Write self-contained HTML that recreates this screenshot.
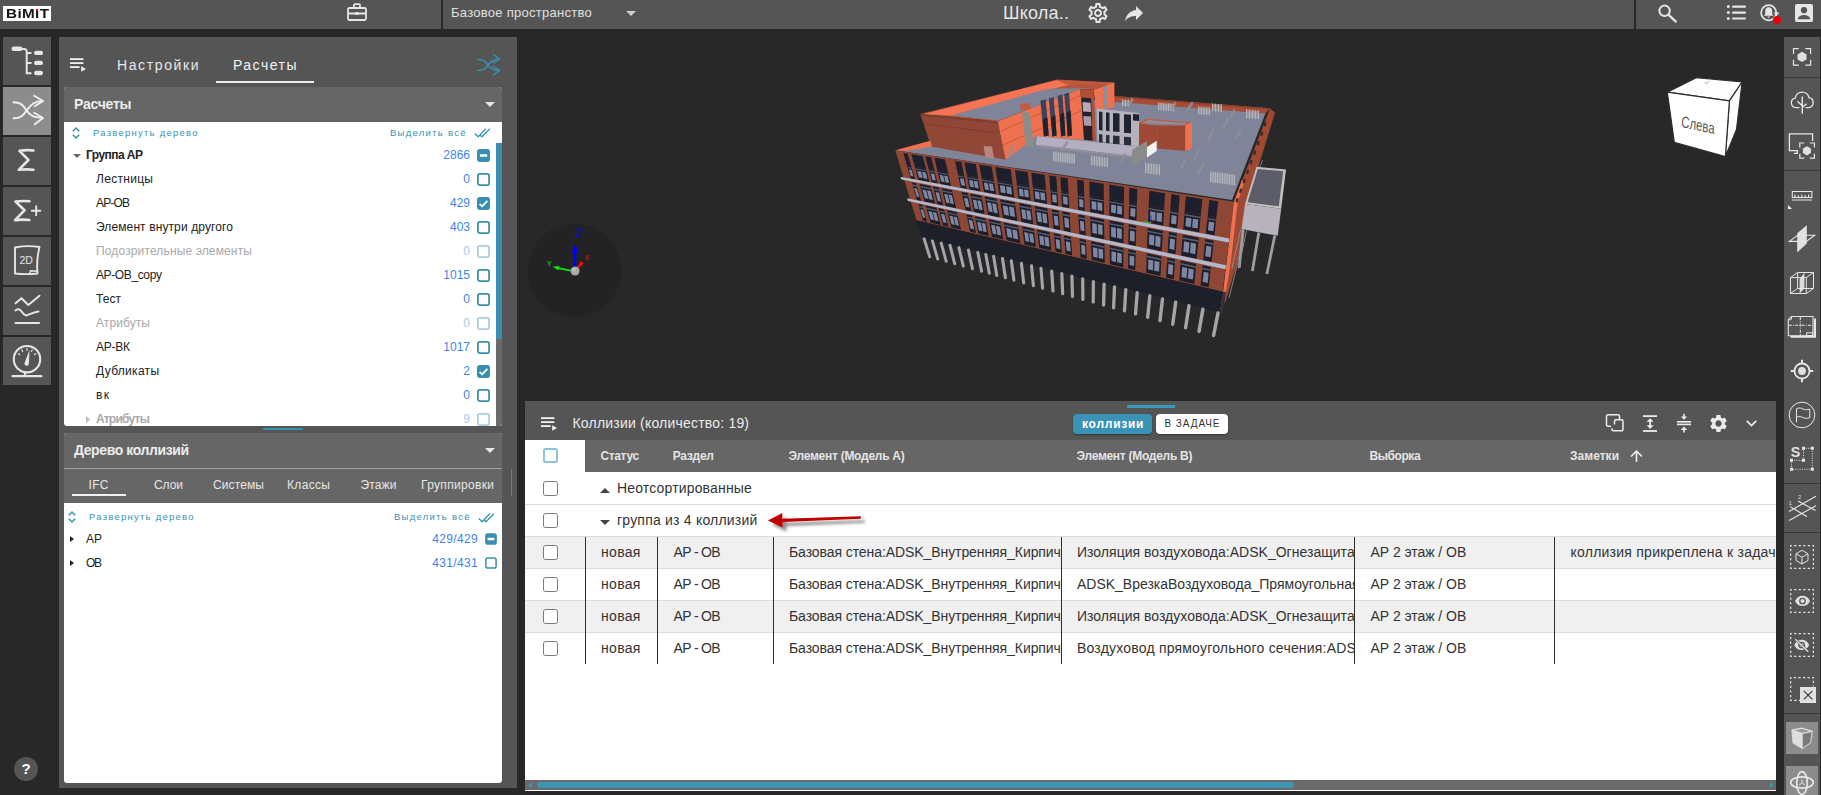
<!DOCTYPE html>
<html lang="ru">
<head>
<meta charset="utf-8">
<title>BIMIT</title>
<style>
*{box-sizing:border-box;margin:0;padding:0}
html,body{width:1821px;height:795px;overflow:hidden;background:#282828;font-family:"Liberation Sans",sans-serif;color:#e6e6e6}
.a{position:absolute}
.t{position:absolute;white-space:nowrap;line-height:1}
svg{position:absolute;overflow:visible}
#topbar{left:0;top:0;width:1821px;height:29px;background:#555}
.sb{left:3px;width:48px;height:48px;background:#555}
.sb.act{background:#8c8c8c}
#lpanel{left:59px;top:37px;width:458px;height:750.500px;background:#555}
.card{background:#fff;border-radius:3px;overflow:hidden}
.chead{left:0;top:0;width:100%;height:35px;background:#666}
.row{left:0;width:100%;height:24px}
.row .n{left:32px;top:6px;font-size:12px;color:#222}
.row .c{right:32px;top:6px;font-size:12px;color:#3d84e6;text-align:right}
.row.dim .n{color:#a8a8a8}
.row.dim .c{color:#a9c8ee}
.cb{position:absolute;width:12px;height:12px;border:1.5px solid #3a8fb0;border-radius:2px;background:#fff}
.cb.on{background:#3a8fb0}
.cb.dim{border-color:#a7cfdd}
.gcb{position:absolute;width:14px;height:14px;border:1.5px solid #767676;border-radius:2px;background:#fff}
#rtool{left:1785px;top:37px;width:33px;height:758px;background:#555}
#bpanel{left:525px;top:401px;width:1251px;height:390px;background:#fff;overflow:hidden}
.tr{left:0;width:1251px;height:32px;border-top:1px solid #dcdcdc;font-size:14px;color:#333}
.tr.alt{background:#f0f0f0}
.tr .t{top:8px}
.vl{position:absolute;top:0;width:1.3px;height:32px;background:#2e2e2e}
</style>
</head>
<body>
<!-- TOP BAR -->
<div id="topbar" class="a">
  <div class="a" style="left:3px;top:6px;width:48px;height:15px;background:#fff"></div>
  <div class="t" style="left:5.600px;top:7.800px;font-size:12px;font-weight:700;letter-spacing:.3px;color:#151515;transform:scaleX(1.270);transform-origin:0 0">BiMıT</div>
  <div class="a" style="left:36.100px;top:8.800px;width:2.300px;height:1.800px;background:#e8000b"></div>
  <svg style="left:347px;top:3px" width="20" height="18" viewBox="0 0 20 18" fill="none" stroke="#e6e6e6" stroke-width="1.8">
    <rect x="1" y="5" width="18" height="12" rx="1.5"/><path d="M7 5V2.2a1 1 0 0 1 1-1h4a1 1 0 0 1 1 1V5M1 10.5h18"/><rect x="8.5" y="9" width="3" height="3" fill="#e6e6e6" stroke="none"/>
  </svg>
  <div class="a" style="left:441px;top:0;width:2px;height:29px;background:#2a2a2a"></div>
  <div class="t" style="left:451px;top:6px;font-size:13px;color:#e0e0e0;letter-spacing:0.28px">Базовое пространство</div>
  <svg style="left:626px;top:11px" width="10" height="5" viewBox="0 0 10 5"><path d="M0 0h10L5 5z" fill="#cfcfcf"/></svg>
  <div class="t" style="left:1003px;top:4px;font-size:18px;color:#e6e6e6;letter-spacing:0.2px">Школа..</div>
  <svg style="left:1086px;top:1px" width="24" height="24" viewBox="0 0 24 24" fill="#e6e6e6"><path d="M19.43 12.98c.04-.32.07-.64.07-.98 0-.34-.03-.66-.07-.98l2.11-1.65c.19-.15.24-.42.12-.64l-2-3.46a.5.5 0 0 0-.61-.22l-2.49 1c-.52-.4-1.08-.73-1.69-.98l-.38-2.65A.488.488 0 0 0 14 2h-4c-.25 0-.46.18-.49.42l-.38 2.65c-.61.25-1.17.59-1.69.98l-2.49-1a.566.566 0 0 0-.18-.03c-.17 0-.34.09-.43.25l-2 3.46c-.13.22-.07.49.12.64l2.11 1.65c-.04.32-.07.65-.07.98 0 .33.03.66.07.98l-2.11 1.65c-.19.15-.24.42-.12.64l2 3.46a.5.5 0 0 0 .61.22l2.49-1c.52.4 1.08.73 1.69.98l.38 2.65c.03.24.24.42.49.42h4c.25 0 .46-.18.49-.42l.38-2.65c.61-.25 1.17-.59 1.69-.98l2.49 1c.06.02.12.03.18.03.17 0 .34-.09.43-.25l2-3.46c.12-.22.07-.49-.12-.64l-2.11-1.65zm-1.98-1.71c.04.31.05.52.05.73 0 .21-.02.43-.05.73l-.14 1.13.89.7 1.08.84-.7 1.21-1.27-.51-1.04-.42-.9.68c-.43.32-.84.56-1.25.73l-1.06.43-.16 1.13-.2 1.35h-1.4l-.19-1.35-.16-1.13-1.06-.43c-.43-.18-.83-.41-1.23-.71l-.91-.7-1.06.43-1.27.51-.7-1.21 1.08-.84.89-.7-.14-1.13c-.03-.31-.05-.54-.05-.74s.02-.43.05-.73l.14-1.13-.89-.7-1.08-.84.7-1.21 1.27.51 1.04.42.9-.68c.43-.32.84-.56 1.25-.73l1.06-.43.16-1.13.2-1.35h1.39l.19 1.35.16 1.13 1.06.43c.43.18.83.41 1.23.71l.91.7 1.06-.43 1.27-.51.7 1.21-1.07.85-.89.7.14 1.13zM12 8c-2.21 0-4 1.79-4 4s1.790 4 4 4 4-1.790 4-4-1.790-4-4-4zm0 6c-1.100 0-2-.9-2-2s.9-2 2-2 2 .9 2 2-.9 2-2 2z"/></svg>
  <svg style="left:1121.5px;top:1px" width="24" height="24" viewBox="0 0 24 24" fill="#e6e6e6"><path d="M14 9V5l7 7-7 7v-4.100c-5 0-8.500 1.600-11 5.100 1-5 4-10 11-11z"/></svg>
  <div class="a" style="left:1634px;top:0;width:2px;height:29px;background:#2a2a2a"></div>
  <svg style="left:1657px;top:3px" width="22" height="21" viewBox="0 0 22 21" fill="none" stroke="#e6e6e6" stroke-width="2"><circle cx="7.600" cy="7.800" r="5.200"/><path d="M11.600 11.800l7.800 7.300" stroke-width="2.300"/></svg>
  <svg style="left:1726px;top:4px" width="21" height="18" viewBox="0 0 21 18" fill="#e6e6e6"><circle cx="2.300" cy="2.600" r="1.500"/><circle cx="2.300" cy="8.600" r="1.500"/><circle cx="2.300" cy="14.500" r="1.500"/><rect x="6" y="1.500" width="14" height="2.200" rx="1"/><rect x="6" y="7.500" width="14" height="2.200" rx="1"/><rect x="6" y="13.400" width="14" height="2.200" rx="1"/></svg>
  <svg style="left:1759px;top:3px" width="24" height="24" viewBox="0 0 24 24"><circle cx="9.700" cy="9.800" r="7.600" fill="none" stroke="#e6e6e6" stroke-width="1.700"/><path d="M9.700 4.300c-2.200 0-3.500 1.700-3.500 3.800v3l-1.200 1.700h9.400l-1.200-1.700v-3c0-2.100-1.300-3.800-3.500-3.800zM8.500 13.600a1.200 1.200 0 0 0 2.400 0z" fill="#e6e6e6"/><path d="M14.500 9.500h6l-3 3.500z" fill="#e6e6e6"/><circle cx="18" cy="16.900" r="4" fill="#e8000b"/></svg>
  <svg style="left:1795px;top:4px" width="18" height="18" viewBox="0 0 18 18"><rect width="18" height="18" rx="2" fill="#e6e6e6"/><circle cx="9" cy="6.200" r="3.100" fill="#555"/><path d="M2.800 15.200c0-3 4.100-4.300 6.200-4.300s6.200 1.300 6.200 4.300z" fill="#555"/></svg>
</div>
<!-- LEFT SIDEBAR -->
<div class="a sb" style="top:37px">
  <svg style="left:0;top:0" width="48" height="48" viewBox="3 37 48 48" fill="none" stroke="#e6e6e6" stroke-width="2" stroke-linecap="round">
    <rect x="11.500" y="46.500" width="11" height="4.600" rx="2.300" fill="#e6e6e6" stroke="none"/>
    <path d="M21 49h3.200q2.500 0 2.500 2.500V73.200h4M26.700 53h4M26.700 63h4"/>
    <rect x="34" y="50.700" width="9" height="4.400" rx="2.200" fill="#e6e6e6" stroke="none"/>
    <rect x="34" y="60.700" width="9" height="4.400" rx="2.200" fill="#e6e6e6" stroke="none"/>
    <rect x="34" y="70.800" width="9" height="4.400" rx="2.200" fill="#e6e6e6" stroke="none"/>
  </svg>
</div>
<div class="a sb act" style="top:87px">
  <svg style="left:0;top:0" width="48" height="48" viewBox="3 87 48 48" fill="none" stroke="#f0f0f0" stroke-width="1.900" stroke-linecap="round" stroke-linejoin="round">
    <path d="M13.500 102.200c9 0 10.500 5 14 9.500s7 6.200 15 6.200"/>
    <path d="M13.500 118.300c9 0 10.500-4.500 14-9s7-8.300 15-8.300"/>
    <path d="M34.200 95.800l8.800 5.200-8.300 5.300"/>
    <path d="M34.200 112.800l8.800 5.200-8.300 6.300"/>
  </svg>
</div>
<div class="a sb" style="top:137px">
  <svg style="left:0;top:0" width="48" height="48" viewBox="3 137 48 48" fill="none" stroke="#e6e6e6" stroke-width="2.600" stroke-linecap="round" stroke-linejoin="round">
    <path d="M33.500 150.500c-5-.6-9.500-.4-14 .3l9 9.200-9.800 9.800c5-.6 10-.6 14.800-.1"/>
  </svg>
</div>
<div class="a sb" style="top:187px">
  <svg style="left:0;top:0" width="48" height="48" viewBox="3 187 48 48" fill="none" stroke="#e6e6e6" stroke-width="2.600" stroke-linecap="round" stroke-linejoin="round">
    <path d="M29.500 201.300c-5-.6-9.500-.4-14 .3l9 8.700-9.500 9.800c5-.6 9.500-.6 14.300-.1"/>
    <path d="M31.800 210.800h8.600M36.200 206.300v9" stroke-width="1.900"/>
  </svg>
</div>
<div class="a sb" style="top:237px">
  <svg style="left:0;top:0" width="48" height="48" viewBox="3 237 48 48" fill="none" stroke="#e6e6e6" stroke-width="1.900" stroke-linejoin="round">
    <path d="M15 247.500c8-1.600 17-1.700 24.500-.5-2 8-3 16-2 26.500-7 .8-15 .8-22.500 0z"/>
    <path d="M29.500 274l1-3.200 7 .5" stroke-width="1.400"/>
    <text x="26.200" y="264.200" font-family="Liberation Sans,sans-serif" font-size="10.500" fill="#e6e6e6" stroke="none" text-anchor="middle">2D</text>
  </svg>
</div>
<div class="a sb" style="top:287px">
  <svg style="left:0;top:0" width="48" height="48" viewBox="3 287 48 48" fill="none" stroke="#e6e6e6" stroke-width="2" stroke-linecap="round" stroke-linejoin="round">
    <path d="M15.500 303.300l6-5 6.800 6.700 11.200-9.300"/>
    <path d="M15.500 310.500c2-1.600 4-1.600 5.500.3 2 2.600 3.500 5 5.500 4.600 4-1 7-3.300 12-4"/>
    <path d="M15.500 323h23.500" stroke-width="2.200"/>
  </svg>
</div>
<div class="a sb" style="top:337px">
  <svg style="left:0;top:0" width="48" height="48" viewBox="3 337 48 48" fill="none" stroke="#e6e6e6" stroke-width="1.900" stroke-linecap="round">
    <circle cx="27" cy="359.200" r="13.200" stroke-width="2.100"/>
    <path d="M25 372v4M12.500 376.200h29" stroke-width="2.200"/>
    <path d="M29.500 349.800l-.6 14.300a2.300 2.300 0 0 1-4.500-.6z" fill="#e6e6e6" stroke="none"/>
    <path d="M27 348.500v1.800M21.800 350l.8 1.500M32.200 350l-.8 1.500M18.300 353.600l1.400 1.100M35.700 353.600l-1.400 1.100" stroke-width="1.200"/>
  </svg>
</div>
<div class="a" style="left:14px;top:757px;width:24px;height:24px;border-radius:12px;background:#555"></div>
<div class="t" style="left:14px;top:761px;width:24px;text-align:center;font-size:15px;font-weight:700;color:#fff">?</div>
<!-- LEFT PANEL -->
<div id="lpanel" class="a">
  <svg style="left:11px;top:21px" width="17" height="15" viewBox="70 58 17 15" fill="#f0f0f0"><rect x="70" y="58.200" width="13.400" height="1.800"/><rect x="70" y="62.200" width="13.400" height="1.800"/><rect x="70" y="66.200" width="9.600" height="1.800"/><path d="M81.200 66.300l4.800 2.700-4.800 2.700z"/></svg>
  <div class="t" style="left:58px;top:21px;font-size:14px;color:#e8e8e8;letter-spacing:1.61px">Настройки</div>
  <div class="t" style="left:174px;top:21px;font-size:14px;color:#f4f4f4;letter-spacing:1.48px">Расчеты</div>
  <div class="a" style="left:157px;top:44px;width:98px;height:2px;background:#f0f0f0"></div>
  <svg style="left:418px;top:16px" width="24" height="23" viewBox="477 53 24 23" fill="none" stroke="#3792b4" stroke-width="1.500" stroke-linecap="round" stroke-linejoin="round"><path d="M478 59.500c7 0 8 3.300 10.500 6.300s5 4.700 11 4.700"/><path d="M478 70.500c7 0 8-3 10.500-6s5-5.500 11-5.500"/><path d="M493.500 54.500l6 4.500-6 4"/><path d="M493.500 66.500l6 4-6 4.500"/></svg>
  <div class="a card" style="left:5px;top:50px;width:438px;height:339px">
    <div class="a chead"></div>
    <div class="t" style="left:10px;top:10px;font-size:14px;font-weight:700;color:#ececec;letter-spacing:-0.23px">Расчеты</div>
    <svg style="left:421px;top:15px" width="10" height="5" viewBox="0 0 10 5"><path d="M0 0h10L5 5z" fill="#e6e6e6"/></svg>
    <svg style="left:8px;top:40px" width="8" height="12" viewBox="0 0 8 12" fill="none" stroke="#3792b4" stroke-width="1.500"><path d="M.8 4.200L4 1l3.200 3.200M.8 7.800L4 11l3.200-3.200"/></svg>
    <div class="t" style="left:29px;top:41px;font-size:9.500px;color:#3792b4;letter-spacing:1.24px">Развернуть дерево</div>
    <div class="t" style="left:326px;top:41px;font-size:9.500px;color:#3792b4;letter-spacing:1.28px">Выделить всё</div>
    <svg style="left:410px;top:41px" width="17" height="10" viewBox="0 0 17 10" fill="none" stroke="#3792b4" stroke-width="1.300"><path d="M.8 5.500l3.400 3.300L11.800.8M6.300 7.300l1.600 1.500L15.800.8"/></svg>
    <div class="a row" style="top:56px"><svg style="left:9px;top:10.500px" width="8" height="4" viewBox="0 0 8 4"><path d="M0 0h8L4 4z" fill="#666"/></svg><div class="t n" style="left:22px;font-weight:700;letter-spacing:-0.55px">Группа АР</div><div class="t c">2866</div><svg style="left:413px;top:5.5px" width="13" height="13" viewBox="0 0 13 13"><rect x=".9" y=".9" width="11.2" height="11.2" rx="1.800" fill="#3a8fb0" stroke="#3a8fb0" stroke-width="1.8"/><rect x="2.9" y="5.2" width="7.3" height="2.600" rx=".5" fill="#fff"/></svg></div>
    <div class="a row" style="top:80px"><div class="t n" style="left:32px;letter-spacing:0.30px">Лестницы</div><div class="t c">0</div><svg style="left:413px;top:5.5px" width="13" height="13" viewBox="0 0 13 13"><rect x=".9" y=".9" width="11.2" height="11.2" rx="1.800" fill="#fff" stroke="#3a8fb0" stroke-width="1.8"/></svg></div>
    <div class="a row" style="top:104px"><div class="t n" style="left:32px;letter-spacing:-0.84px">АР-ОВ</div><div class="t c">429</div><svg style="left:413px;top:5.5px" width="13" height="13" viewBox="0 0 13 13"><rect x=".9" y=".9" width="11.2" height="11.2" rx="1.800" fill="#3a8fb0" stroke="#3a8fb0" stroke-width="1.8"/><path d="M2.6 6.8l2.6 2.6 5.2-5.5" fill="none" stroke="#fff" stroke-width="1.700"/></svg></div>
    <div class="a row" style="top:128px"><div class="t n" style="left:32px;letter-spacing:0.11px">Элемент внутри другого</div><div class="t c">403</div><svg style="left:413px;top:5.5px" width="13" height="13" viewBox="0 0 13 13"><rect x=".9" y=".9" width="11.2" height="11.2" rx="1.800" fill="#fff" stroke="#3a8fb0" stroke-width="1.8"/></svg></div>
    <div class="a row dim" style="top:152px"><div class="t n" style="left:32px;letter-spacing:0.14px">Подозрительные элементы</div><div class="t c">0</div><svg style="left:413px;top:5.5px" width="13" height="13" viewBox="0 0 13 13"><rect x=".9" y=".9" width="11.2" height="11.2" rx="1.800" fill="#fff" stroke="#a7cfdd" stroke-width="1.8"/></svg></div>
    <div class="a row" style="top:176px"><div class="t n" style="left:32px;letter-spacing:-0.38px">АР-ОВ_copy</div><div class="t c">1015</div><svg style="left:413px;top:5.5px" width="13" height="13" viewBox="0 0 13 13"><rect x=".9" y=".9" width="11.2" height="11.2" rx="1.800" fill="#fff" stroke="#3a8fb0" stroke-width="1.8"/></svg></div>
    <div class="a row" style="top:200px"><div class="t n" style="left:32px;letter-spacing:0.06px">Тест</div><div class="t c">0</div><svg style="left:413px;top:5.5px" width="13" height="13" viewBox="0 0 13 13"><rect x=".9" y=".9" width="11.2" height="11.2" rx="1.800" fill="#fff" stroke="#3a8fb0" stroke-width="1.8"/></svg></div>
    <div class="a row dim" style="top:224px"><div class="t n" style="left:32px;letter-spacing:0.09px">Атрибуты</div><div class="t c">0</div><svg style="left:413px;top:5.5px" width="13" height="13" viewBox="0 0 13 13"><rect x=".9" y=".9" width="11.2" height="11.2" rx="1.800" fill="#fff" stroke="#a7cfdd" stroke-width="1.8"/></svg></div>
    <div class="a row" style="top:248px"><div class="t n" style="left:32px;letter-spacing:-0.25px">АР-ВК</div><div class="t c">1017</div><svg style="left:413px;top:5.5px" width="13" height="13" viewBox="0 0 13 13"><rect x=".9" y=".9" width="11.2" height="11.2" rx="1.800" fill="#fff" stroke="#3a8fb0" stroke-width="1.8"/></svg></div>
    <div class="a row" style="top:272px"><div class="t n" style="left:32px;letter-spacing:0.30px">Дубликаты</div><div class="t c">2</div><svg style="left:413px;top:5.5px" width="13" height="13" viewBox="0 0 13 13"><rect x=".9" y=".9" width="11.2" height="11.2" rx="1.800" fill="#3a8fb0" stroke="#3a8fb0" stroke-width="1.8"/><path d="M2.6 6.8l2.6 2.6 5.2-5.5" fill="none" stroke="#fff" stroke-width="1.700"/></svg></div>
    <div class="a row" style="top:296px"><div class="t n" style="left:32px;letter-spacing:1.38px">вк</div><div class="t c">0</div><svg style="left:413px;top:5.5px" width="13" height="13" viewBox="0 0 13 13"><rect x=".9" y=".9" width="11.2" height="11.2" rx="1.800" fill="#fff" stroke="#3a8fb0" stroke-width="1.8"/></svg></div>
    <div class="a row dim" style="top:320px"><svg style="left:22px;top:9px" width="4" height="7" viewBox="0 0 4 7"><path d="M0 0v7l4-3.500z" fill="#bbb"/></svg><div class="t n" style="left:32px;font-weight:700;letter-spacing:-0.76px">Атрибуты</div><div class="t c">9</div><svg style="left:413px;top:5.5px" width="13" height="13" viewBox="0 0 13 13"><rect x=".9" y=".9" width="11.2" height="11.2" rx="1.800" fill="#fff" stroke="#a7cfdd" stroke-width="1.8"/></svg></div>
    <div class="a" style="left:432px;top:56px;width:6px;height:283px;background:#6a6a6a"></div>
    <div class="a" style="left:432px;top:56px;width:6px;height:196px;background:#3a8fb0"></div>
  </div>
  <div class="a" style="left:204px;top:391px;width:40px;height:2px;background:#3a8fb0"></div>
  <div class="a card" style="left:5px;top:396px;width:438px;height:350px">
    <div class="a chead" style="height:70px"></div>
    <div class="a" style="left:0;top:35px;width:438px;height:1px;background:#a0a0a0"></div>
    <div class="t" style="left:10px;top:10px;font-size:14px;font-weight:700;color:#ececec;letter-spacing:-0.41px">Дерево коллизий</div>
    <svg style="left:421px;top:15px" width="10" height="5" viewBox="0 0 10 5"><path d="M0 0h10L5 5z" fill="#e6e6e6"/></svg>
    <div class="t" style="left:24.5px;top:46px;font-size:12px;color:#e6e6e6;letter-spacing:0.33px">IFC</div>
    <div class="t" style="left:90.0px;top:46px;font-size:12px;color:#e6e6e6;letter-spacing:-0.06px">Слои</div>
    <div class="t" style="left:149.0px;top:46px;font-size:12px;color:#e6e6e6;letter-spacing:0.12px">Системы</div>
    <div class="t" style="left:223.0px;top:46px;font-size:12px;color:#e6e6e6;letter-spacing:0.34px">Классы</div>
    <div class="t" style="left:296.5px;top:46px;font-size:12px;color:#e6e6e6;letter-spacing:0.15px">Этажи</div>
    <div class="t" style="left:357.0px;top:46px;font-size:12px;color:#e6e6e6;letter-spacing:0.33px">Группировки</div>
    <div class="a" style="left:8px;top:61px;width:54px;height:1.500px;background:#f0f0f0"></div>
    <svg style="left:4px;top:78px" width="8" height="12" viewBox="0 0 8 12" fill="none" stroke="#3792b4" stroke-width="1.500"><path d="M.8 4.200L4 1l3.200 3.200M.8 7.800L4 11l3.200-3.200"/></svg>
    <div class="t" style="left:25px;top:78.500px;font-size:9.500px;color:#3792b4;letter-spacing:1.24px">Развернуть дерево</div>
    <div class="t" style="left:330px;top:78.500px;font-size:9.500px;color:#3792b4;letter-spacing:1.28px">Выделить всё</div>
    <svg style="left:414px;top:79.500px" width="17" height="10" viewBox="0 0 17 10" fill="none" stroke="#3792b4" stroke-width="1.300"><path d="M.8 5.500l3.400 3.300L11.800.8M6.300 7.300l1.600 1.500L15.800.8"/></svg>
    <div class="a row" style="top:94px"><svg style="left:6px;top:9px" width="4" height="6" viewBox="0 0 4 6"><path d="M0 0v6l4-3z" fill="#222"/></svg><div class="t n" style="left:22px;letter-spacing:-0.02px">АР</div><div class="t c" style="right:24px;letter-spacing:0.35px">429/429</div><svg style="left:420.5px;top:6px" width="12" height="12" viewBox="0 0 12 12"><rect x=".9" y=".9" width="10.2" height="10.2" rx="1.800" fill="#3a8fb0" stroke="#3a8fb0" stroke-width="1.5"/><rect x="2.6" y="4.7" width="6.7" height="2.600" rx=".5" fill="#fff"/></svg></div>
    <div class="a row" style="top:118px"><svg style="left:6px;top:9px" width="4" height="6" viewBox="0 0 4 6"><path d="M0 0v6l4-3z" fill="#222"/></svg><div class="t n" style="left:22px;letter-spacing:-1.34px">ОВ</div><div class="t c" style="right:24px;letter-spacing:0.35px">431/431</div><svg style="left:420.5px;top:6px" width="12" height="12" viewBox="0 0 12 12"><rect x=".9" y=".9" width="10.2" height="10.2" rx="1.800" fill="#fff" stroke="#3a8fb0" stroke-width="1.5"/></svg></div>
  </div>
  <div class="a" style="left:451.500px;top:432px;width:1.500px;height:27px;background:#3a8fb0"></div>
</div>
<!-- VIEWPORT -->
<svg style="left:0;top:0" width="1821" height="795" viewBox="0 0 1821 795" shape-rendering="geometricPrecision">
<g><polygon points="897.0,150.5 1232.0,200.0 1266.0,112.0 1114.0,100.0 1050.0,100.0 930.0,141.0" fill="#7f8499"/>
<polygon points="1112.0,95.8 1270.0,108.2 1265.5,113.6 1112.0,101.8" fill="#a84c34"/>
<polygon points="1112.0,95.8 1270.0,108.2 1269.5,109.5 1112.0,97.2" fill="#8a4030"/>
<polygon points="920.4,114.0 1057.0,79.6 1114.4,82.5 1093.6,89.8 1080.3,89.0 998.1,121.5" fill="#b4523a"/>
<polygon points="923.0,114.2 1056.5,80.3 1070.0,84.5 951.4,115.6" fill="#f37553"/>
<polygon points="951.4,115.5 1039.5,90.9 1054.0,88.5 1094.0,88.2 1080.0,89.2 998.3,120.6" fill="#7f8499"/>
<polygon points="1057.0,80.0 1114.0,82.8 1110.0,85.0 1066.0,84.6" fill="#c2583c"/>
<polygon points="920.4,114.0 998.1,121.5 1005.7,159.7 931.0,146.5" fill="#914735"/>
<polygon points="920.4,114.0 998.1,121.5 998.5,123.6 921.0,116.0" fill="#7e3d2e"/>
<path d="M925 123.800l73.800 9.300" stroke="#7a3a2c" stroke-width=".8" fill="none"/>
<polygon points="983.5,146.0 992.0,146.5 994.0,158.5 985.5,157.5" fill="#b8867e"/>
<polygon points="998.1,121.5 1080.3,89.0 1084.0,140.0 1036.7,136.3 1005.7,159.7" fill="#f0714f"/>
<path d="M1000.800 131.400l80-36M1003 145l78-34" stroke="#b5503a" stroke-width=".7" fill="none"/>
<polygon points="1022.0,112.5 1029.5,112.0 1034.0,146.5 1026.0,148.0" fill="#8c8c8c"/>
<polygon points="1020.0,104.0 1030.0,103.2 1030.6,109.0 1020.6,110.0" fill="#c55a3e"/>
<polygon points="1040.4,100.8 1045.7,99.3 1048.7,135.5 1043.9,136.5" fill="#3e4258"/>
<polygon points="1042.6,119.8 1047.4,117.3 1048.7,135.5 1043.9,136.5" fill="#20222c"/>
<polygon points="1048.8,98.4 1053.6,97.0 1056.6,135.5 1052.3,136.5" fill="#3e4258"/>
<polygon points="1051.0,117.4 1055.3,115.0 1056.6,135.5 1052.3,136.5" fill="#20222c"/>
<polygon points="1057.6,95.8 1062.4,94.4 1065.4,135.5 1061.1,136.5" fill="#3e4258"/>
<polygon points="1059.8,114.8 1064.1,112.4 1065.4,135.5 1061.1,136.5" fill="#20222c"/>
<polygon points="1064.2,93.9 1069.0,92.5 1072.0,135.5 1067.7,136.5" fill="#3e4258"/>
<polygon points="1066.4,112.9 1070.7,110.5 1072.0,135.5 1067.7,136.5" fill="#20222c"/>
<polygon points="1080.3,89.0 1093.6,89.8 1096.0,141.0 1084.0,140.0" fill="#b04e36"/>
<polygon points="1081.3,97.5 1091.0,98.2 1092.5,140.5 1084.0,139.8" fill="#20222c"/>
<polygon points="1082.5,102.0 1090.5,102.8 1091.0,112.0 1083.0,111.5" fill="#b9a9b8"/>
<polygon points="1083.3,116.0 1091.0,116.5 1091.5,126.0 1084.0,125.5" fill="#a79bb0"/>
<polygon points="1093.6,89.8 1114.4,82.6 1114.4,107.5 1096.0,110.0" fill="#f0714f"/>
<polygon points="1103.0,86.8 1107.0,85.5 1107.0,108.0 1103.0,108.5" fill="#8d8f96"/>
<polygon points="1096.5,108.5 1139.0,113.0 1139.0,146.5 1097.5,141.0" fill="#b6b2bc"/>
<polygon points="1099.0,111.5 1102.5,111.9 1102.5,130.5 1099.0,130.0" fill="#1f2230"/>
<polygon points="1099.0,134.0 1102.5,134.4 1102.5,143.0 1099.0,142.6" fill="#2a2d3c"/>
<polygon points="1106.0,112.3 1109.5,112.7 1109.5,131.3 1106.0,130.8" fill="#1f2230"/>
<polygon points="1106.0,134.8 1109.5,135.2 1109.5,143.8 1106.0,143.4" fill="#2a2d3c"/>
<polygon points="1113.0,113.0 1119.5,113.4 1119.5,132.0 1113.0,131.5" fill="#1f2230"/>
<polygon points="1113.0,135.5 1119.5,135.9 1119.5,144.5 1113.0,144.1" fill="#2a2d3c"/>
<polygon points="1124.0,114.2 1131.0,114.7 1131.0,133.2 1124.0,132.8" fill="#1f2230"/>
<polygon points="1124.0,136.8 1131.0,137.2 1131.0,145.8 1124.0,145.3" fill="#2a2d3c"/>
<polygon points="1133.0,114.0 1139.0,114.5 1139.0,121.0 1133.0,120.5" fill="#1f2230"/>
<polygon points="1037.0,136.3 1139.0,146.5 1131.5,156.0 1036.0,144.8" fill="#b3afc0"/>
<polygon points="1036.0,144.8 1131.5,156.0 1131.5,158.0 1036.0,147.0" fill="#8e8e9c"/>
<polygon points="1139.0,123.6 1146.6,118.6 1192.0,122.6 1185.6,125.6" fill="#c65a3d"/>
<polygon points="1142.5,123.3 1148.0,120.0 1187.5,123.2 1183.5,125.0" fill="#8a8fa3"/>
<polygon points="1139.0,123.6 1157.4,125.6 1157.4,148.0 1139.0,145.8" fill="#a04a35"/>
<polygon points="1157.4,125.6 1185.4,125.6 1185.4,151.0 1157.4,148.5" fill="#9a4733"/>
<polygon points="1185.4,125.6 1192.0,122.6 1192.0,148.0 1185.4,151.0" fill="#f0714f"/>
<polygon points="1147.0,147.0 1156.7,140.7 1156.7,151.0 1147.0,157.5" fill="#f2f2f2"/>
<polygon points="1132.0,150.0 1147.0,141.0 1147.0,157.5 1132.0,166.5" fill="#8b8b8b"/>
<polygon points="895.2,150.2 930.5,140.7 931.8,146.4 905.3,151.0" fill="#f0714f"/>
<polygon points="1053.0,152.0 1075.0,154.6 1075.0,163.6 1053.0,161.0" fill="#9a9ca3" opacity=".75"/><path d="M1053.6 151.3v10.0" stroke="#c6c7cc" stroke-width=".7"/><path d="M1055.9 151.5v10.0" stroke="#c6c7cc" stroke-width=".7"/><path d="M1058.2 151.8v10.0" stroke="#c6c7cc" stroke-width=".7"/><path d="M1060.5 152.1v10.0" stroke="#c6c7cc" stroke-width=".7"/><path d="M1062.8 152.4v10.0" stroke="#c6c7cc" stroke-width=".7"/><path d="M1065.2 152.7v10.0" stroke="#c6c7cc" stroke-width=".7"/><path d="M1067.5 152.9v10.0" stroke="#c6c7cc" stroke-width=".7"/><path d="M1069.8 153.2v10.0" stroke="#c6c7cc" stroke-width=".7"/><path d="M1072.1 153.5v10.0" stroke="#c6c7cc" stroke-width=".7"/><path d="M1074.4 153.8v10.0" stroke="#c6c7cc" stroke-width=".7"/>
<polygon points="1091.0,156.0 1108.0,158.0 1108.0,167.0 1091.0,165.0" fill="#9a9ca3" opacity=".75"/><path d="M1091.6 155.3v10.0" stroke="#c6c7cc" stroke-width=".7"/><path d="M1094.2 155.6v10.0" stroke="#c6c7cc" stroke-width=".7"/><path d="M1096.9 155.9v10.0" stroke="#c6c7cc" stroke-width=".7"/><path d="M1099.5 156.2v10.0" stroke="#c6c7cc" stroke-width=".7"/><path d="M1102.1 156.5v10.0" stroke="#c6c7cc" stroke-width=".7"/><path d="M1104.8 156.9v10.0" stroke="#c6c7cc" stroke-width=".7"/><path d="M1107.4 157.2v10.0" stroke="#c6c7cc" stroke-width=".7"/>
<polygon points="1145.0,163.0 1160.0,164.9 1160.0,174.9 1145.0,173.0" fill="#9a9ca3" opacity=".75"/><path d="M1145.6 162.3v11.0" stroke="#c6c7cc" stroke-width=".7"/><path d="M1148.4 162.6v11.0" stroke="#c6c7cc" stroke-width=".7"/><path d="M1151.1 163.0v11.0" stroke="#c6c7cc" stroke-width=".7"/><path d="M1153.9 163.4v11.0" stroke="#c6c7cc" stroke-width=".7"/><path d="M1156.6 163.7v11.0" stroke="#c6c7cc" stroke-width=".7"/><path d="M1159.4 164.1v11.0" stroke="#c6c7cc" stroke-width=".7"/>
<polygon points="1210.0,172.0 1235.0,175.2 1235.0,185.2 1210.0,182.0" fill="#9a9ca3" opacity=".75"/><path d="M1210.6 171.3v11.0" stroke="#c6c7cc" stroke-width=".7"/><path d="M1213.0 171.6v11.0" stroke="#c6c7cc" stroke-width=".7"/><path d="M1215.4 171.9v11.0" stroke="#c6c7cc" stroke-width=".7"/><path d="M1217.7 172.2v11.0" stroke="#c6c7cc" stroke-width=".7"/><path d="M1220.1 172.5v11.0" stroke="#c6c7cc" stroke-width=".7"/><path d="M1222.5 172.8v11.0" stroke="#c6c7cc" stroke-width=".7"/><path d="M1224.9 173.1v11.0" stroke="#c6c7cc" stroke-width=".7"/><path d="M1227.3 173.4v11.0" stroke="#c6c7cc" stroke-width=".7"/><path d="M1229.6 173.8v11.0" stroke="#c6c7cc" stroke-width=".7"/><path d="M1232.0 174.1v11.0" stroke="#c6c7cc" stroke-width=".7"/><path d="M1234.4 174.4v11.0" stroke="#c6c7cc" stroke-width=".7"/>
<polygon points="1158.0,103.0 1174.0,104.3 1174.0,111.3 1158.0,110.0" fill="#9a9ca3" opacity=".75"/><path d="M1158.6 102.2v8.0" stroke="#c6c7cc" stroke-width=".7"/><path d="M1161.1 102.4v8.0" stroke="#c6c7cc" stroke-width=".7"/><path d="M1163.5 102.6v8.0" stroke="#c6c7cc" stroke-width=".7"/><path d="M1166.0 102.8v8.0" stroke="#c6c7cc" stroke-width=".7"/><path d="M1168.5 103.0v8.0" stroke="#c6c7cc" stroke-width=".7"/><path d="M1170.9 103.2v8.0" stroke="#c6c7cc" stroke-width=".7"/><path d="M1173.4 103.4v8.0" stroke="#c6c7cc" stroke-width=".7"/>
<polygon points="1198.0,107.0 1210.0,108.0 1210.0,115.0 1198.0,114.0" fill="#9a9ca3" opacity=".75"/><path d="M1198.6 106.2v8.0" stroke="#c6c7cc" stroke-width=".7"/><path d="M1201.3 106.5v8.0" stroke="#c6c7cc" stroke-width=".7"/><path d="M1204.0 106.7v8.0" stroke="#c6c7cc" stroke-width=".7"/><path d="M1206.7 106.9v8.0" stroke="#c6c7cc" stroke-width=".7"/><path d="M1209.4 107.1v8.0" stroke="#c6c7cc" stroke-width=".7"/>
<polygon points="1246.0,110.0 1259.0,111.0 1259.0,119.0 1246.0,118.0" fill="#9a9ca3" opacity=".75"/><path d="M1246.6 109.2v9.0" stroke="#c6c7cc" stroke-width=".7"/><path d="M1249.5 109.5v9.0" stroke="#c6c7cc" stroke-width=".7"/><path d="M1252.5 109.7v9.0" stroke="#c6c7cc" stroke-width=".7"/><path d="M1255.4 110.0v9.0" stroke="#c6c7cc" stroke-width=".7"/><path d="M1258.4 110.2v9.0" stroke="#c6c7cc" stroke-width=".7"/>
<polygon points="1122.0,100.0 1129.0,100.3 1129.0,106.3 1122.0,106.0" fill="#9a9ca3" opacity=".75"/><path d="M1122.6 99.2v7.0" stroke="#c6c7cc" stroke-width=".7"/><path d="M1125.5 99.4v7.0" stroke="#c6c7cc" stroke-width=".7"/><path d="M1128.4 99.5v7.0" stroke="#c6c7cc" stroke-width=".7"/>
<polygon points="1212.0,104.0 1222.0,104.8 1222.0,111.8 1212.0,111.0" fill="#9a9ca3" opacity=".75"/><path d="M1212.6 103.2v8.0" stroke="#c6c7cc" stroke-width=".7"/><path d="M1215.5 103.5v8.0" stroke="#c6c7cc" stroke-width=".7"/><path d="M1218.5 103.7v8.0" stroke="#c6c7cc" stroke-width=".7"/><path d="M1221.4 104.0v8.0" stroke="#c6c7cc" stroke-width=".7"/>
<polygon points="1230.0,117.0 1234.0,108.0 1235.5,111.0 1231.5,120.0" fill="#8e9098" opacity=".8"/>
<polygon points="1170.0,109.0 1175.0,101.0 1176.5,104.0 1171.5,112.0" fill="#8e9098" opacity=".8"/>
<polygon points="1128.0,104.0 1132.0,97.0 1133.5,100.0 1129.5,107.0" fill="#8e9098" opacity=".8"/>
<polygon points="1186.0,109.0 1192.0,101.0 1193.5,104.0 1187.5,112.0" fill="#8e9098" opacity=".8"/>
<polygon points="1235.0,138.0 1240.0,128.0 1241.5,131.0 1236.5,141.0" fill="#8e9098" opacity=".8"/>
<polygon points="1180.0,167.0 1185.0,158.0 1186.5,161.0 1181.5,170.0" fill="#8e9098" opacity=".8"/>
<polygon points="1120.0,160.0 1125.0,152.0 1126.5,155.0 1121.5,163.0" fill="#8e9098" opacity=".8"/>
<polygon points="1193.0,158.0 1198.0,148.0 1199.5,151.0 1194.5,161.0" fill="#8e9098" opacity=".8"/>
<polygon points="1207.0,140.0 1213.0,128.0 1214.5,131.0 1208.5,143.0" fill="#8e9098" opacity=".8"/>
<polygon points="1222.0,127.0 1228.0,116.0 1229.5,119.0 1223.5,130.0" fill="#8e9098" opacity=".8"/>
<polygon points="1197.0,173.0 1203.0,162.0 1204.5,165.0 1198.5,176.0" fill="#8e9098" opacity=".8"/>
<polygon points="1008.0,156.0 1013.0,143.0 1014.5,146.0 1009.5,159.0" fill="#8e9098" opacity=".8"/>
<polygon points="1061.0,149.0 1067.0,140.0 1068.5,143.0 1062.5,152.0" fill="#8e9098" opacity=".8"/>
<polygon points="895.2,150.2 1234.0,201.7 1222.6,291.8 916.5,220.2" fill="#8f4735"/>
<polygon points="916.5,220.2 1222.6,291.8 1220.0,312.6 921.7,237.3" fill="#1e2029"/>
<polygon points="903.3,153.0 907.7,153.6 911.3,166.2 906.9,165.5" fill="#1d202c"/>
<polygon points="906.9,165.5 911.3,166.2 914.9,179.2 910.7,178.4" fill="#1c1f29"/>
<polygon points="907.4,167.0 911.7,167.7 912.0,168.8 907.7,168.0" fill="#565d75"/>
<polygon points="908.9,169.5 911.6,169.9 913.4,176.4 910.8,175.9" fill="#7d86a2"/>
<polygon points="911.9,182.4 916.1,183.2 921.1,200.9 917.0,200.0" fill="#1c1f29"/>
<polygon points="912.5,184.5 916.7,185.3 917.1,186.8 912.9,185.9" fill="#565d75"/>
<polygon points="914.2,187.9 916.8,188.4 919.4,197.2 916.8,196.6" fill="#7d86a2"/>
<polygon points="918.2,203.9 922.2,204.8 927.1,221.7 923.1,220.8" fill="#1c1f29"/>
<polygon points="918.8,206.0 922.8,206.8 923.2,208.2 919.1,207.3" fill="#565d75"/>
<polygon points="920.5,209.2 923.0,209.7 925.4,218.2 922.9,217.6" fill="#7d86a2"/>
<polygon points="911.3,154.2 922.7,155.9 926.0,168.6 914.8,166.8" fill="#1d202c"/>
<polygon points="914.8,166.8 926.0,168.6 929.4,181.9 918.4,179.8" fill="#1c1f29"/>
<polygon points="915.2,168.3 926.4,170.2 926.7,171.3 915.5,169.4" fill="#565d75"/>
<polygon points="917.2,170.9 921.0,171.6 922.7,178.1 919.0,177.4" fill="#7d86a2"/>
<polygon points="921.9,171.7 925.7,172.4 927.4,179.0 923.6,178.3" fill="#7d86a2"/>
<polygon points="919.5,183.9 930.5,186.0 935.2,203.8 924.5,201.6" fill="#1c1f29"/>
<polygon points="920.1,186.0 931.0,188.1 931.4,189.6 920.5,187.4" fill="#565d75"/>
<polygon points="922.3,189.4 926.0,190.2 928.4,199.0 924.8,198.3" fill="#7d86a2"/>
<polygon points="926.9,190.3 930.6,191.1 932.9,200.0 929.3,199.2" fill="#7d86a2"/>
<polygon points="925.6,205.5 936.2,207.8 940.7,224.9 930.4,222.5" fill="#1c1f29"/>
<polygon points="926.2,207.6 936.7,209.9 937.1,211.2 926.5,208.9" fill="#565d75"/>
<polygon points="928.3,210.9 931.8,211.7 934.2,220.2 930.6,219.4" fill="#7d86a2"/>
<polygon points="932.7,211.9 936.3,212.7 938.5,221.2 935.0,220.4" fill="#7d86a2"/>
<polygon points="925.3,156.3 931.2,157.3 934.4,170.0 928.6,169.1" fill="#1d202c"/>
<polygon points="928.6,169.1 934.4,170.0 937.6,183.4 931.9,182.3" fill="#1c1f29"/>
<polygon points="929.0,170.7 934.8,171.6 935.0,172.7 929.2,171.7" fill="#565d75"/>
<polygon points="930.7,173.3 934.3,173.9 935.9,180.5 932.4,179.9" fill="#7d86a2"/>
<polygon points="933.0,186.5 938.6,187.6 943.1,205.5 937.6,204.3" fill="#1c1f29"/>
<polygon points="933.5,188.6 939.2,189.7 939.5,191.2 933.9,190.1" fill="#565d75"/>
<polygon points="935.5,192.1 939.0,192.7 941.2,201.7 937.8,201.0" fill="#7d86a2"/>
<polygon points="938.6,208.3 944.1,209.5 948.4,226.7 943.0,225.5" fill="#1c1f29"/>
<polygon points="939.1,210.4 944.6,211.6 945.0,213.0 939.5,211.8" fill="#565d75"/>
<polygon points="941.0,213.7 944.4,214.5 946.6,223.0 943.2,222.3" fill="#7d86a2"/>
<polygon points="934.3,157.7 945.1,159.4 948.0,172.3 937.4,170.6" fill="#1d202c"/>
<polygon points="937.4,170.6 948.0,172.3 951.0,185.9 940.6,184.0" fill="#1c1f29"/>
<polygon points="937.8,172.2 948.4,174.0 948.6,175.0 938.0,173.2" fill="#565d75"/>
<polygon points="939.6,174.8 943.2,175.4 944.7,182.2 941.2,181.5" fill="#7d86a2"/>
<polygon points="944.0,175.6 947.6,176.2 949.2,183.0 945.6,182.3" fill="#7d86a2"/>
<polygon points="941.6,188.2 951.9,190.2 956.1,208.2 946.0,206.1" fill="#1c1f29"/>
<polygon points="942.1,190.3 952.4,192.3 952.8,193.8 942.5,191.7" fill="#565d75"/>
<polygon points="944.1,193.8 947.6,194.5 949.8,203.5 946.3,202.7" fill="#7d86a2"/>
<polygon points="948.4,194.6 952.0,195.3 954.0,204.3 950.6,203.6" fill="#7d86a2"/>
<polygon points="947.0,210.1 957.0,212.3 961.0,229.6 951.2,227.4" fill="#1c1f29"/>
<polygon points="947.5,212.2 957.5,214.4 957.8,215.8 947.8,213.6" fill="#565d75"/>
<polygon points="949.4,215.6 952.8,216.3 954.9,224.9 951.5,224.2" fill="#7d86a2"/>
<polygon points="953.6,216.5 957.0,217.2 959.0,225.9 955.7,225.1" fill="#7d86a2"/>
<polygon points="955.1,160.9 961.5,161.9 964.1,175.0 957.9,174.0" fill="#1d202c"/>
<polygon points="957.9,174.0 964.1,175.0 966.8,188.9 960.7,187.7" fill="#1c1f29"/>
<polygon points="958.2,175.6 964.5,176.7 964.7,177.8 958.4,176.7" fill="#565d75"/>
<polygon points="959.9,178.3 963.8,179.0 965.2,185.9 961.3,185.2" fill="#7d86a2"/>
<polygon points="961.5,192.0 967.7,193.2 971.4,211.4 965.5,210.2" fill="#1c1f29"/>
<polygon points="962.0,194.2 968.1,195.4 968.4,196.8 962.3,195.6" fill="#565d75"/>
<polygon points="963.9,197.7 967.7,198.4 969.6,207.6 965.9,206.8" fill="#7d86a2"/>
<polygon points="966.3,214.3 972.3,215.6 975.9,233.1 970.1,231.7" fill="#1c1f29"/>
<polygon points="966.8,216.4 972.7,217.7 973.0,219.1 967.1,217.8" fill="#565d75"/>
<polygon points="968.6,219.8 972.3,220.6 974.1,229.4 970.5,228.5" fill="#7d86a2"/>
<polygon points="964.3,162.3 975.7,164.1 978.1,177.4 966.9,175.5" fill="#1d202c"/>
<polygon points="966.9,175.5 978.1,177.4 980.5,191.4 969.5,189.4" fill="#1c1f29"/>
<polygon points="967.2,177.2 978.4,179.0 978.6,180.2 967.4,178.3" fill="#565d75"/>
<polygon points="969.0,179.9 972.8,180.5 974.1,187.5 970.3,186.8" fill="#7d86a2"/>
<polygon points="973.7,180.7 977.5,181.3 978.7,188.4 974.9,187.7" fill="#7d86a2"/>
<polygon points="970.4,193.7 981.3,195.8 984.7,214.2 974.1,212.0" fill="#1c1f29"/>
<polygon points="970.8,195.9 981.7,198.0 982.0,199.5 971.1,197.4" fill="#565d75"/>
<polygon points="972.8,199.4 976.4,200.2 978.2,209.3 974.6,208.6" fill="#7d86a2"/>
<polygon points="977.3,200.3 981.0,201.1 982.7,210.3 979.1,209.5" fill="#7d86a2"/>
<polygon points="974.9,216.2 985.5,218.4 988.8,236.1 978.4,233.7" fill="#1c1f29"/>
<polygon points="975.3,218.3 985.9,220.6 986.1,222.0 975.6,219.7" fill="#565d75"/>
<polygon points="977.2,221.7 980.7,222.5 982.5,231.3 978.9,230.5" fill="#7d86a2"/>
<polygon points="981.6,222.7 985.2,223.5 986.8,232.3 983.3,231.5" fill="#7d86a2"/>
<polygon points="979.3,164.6 991.7,166.5 993.8,180.0 981.6,178.0" fill="#1d202c"/>
<polygon points="981.6,178.0 993.8,180.0 996.0,194.3 984.0,192.1" fill="#1c1f29"/>
<polygon points="981.9,179.6 994.1,181.7 994.3,182.9 982.1,180.8" fill="#565d75"/>
<polygon points="983.8,182.4 987.9,183.2 989.0,190.3 985.0,189.5" fill="#7d86a2"/>
<polygon points="988.9,183.3 993.0,184.0 994.1,191.2 990.0,190.4" fill="#7d86a2"/>
<polygon points="984.7,196.5 996.6,198.8 999.7,217.4 988.1,214.9" fill="#1c1f29"/>
<polygon points="985.1,198.7 997.0,201.0 997.2,202.5 985.4,200.2" fill="#565d75"/>
<polygon points="987.1,202.3 991.1,203.1 992.7,212.3 988.8,211.5" fill="#7d86a2"/>
<polygon points="992.1,203.3 996.1,204.1 997.7,213.4 993.7,212.5" fill="#7d86a2"/>
<polygon points="988.8,219.2 1000.3,221.7 1003.3,239.5 992.0,236.9" fill="#1c1f29"/>
<polygon points="989.2,221.3 1000.7,223.8 1000.9,225.2 989.5,222.7" fill="#565d75"/>
<polygon points="991.1,224.8 995.0,225.6 996.5,234.5 992.7,233.6" fill="#7d86a2"/>
<polygon points="995.9,225.8 999.8,226.7 1001.3,235.6 997.5,234.7" fill="#7d86a2"/>
<polygon points="995.3,167.1 1010.7,169.5 1012.5,183.1 997.4,180.6" fill="#1d202c"/>
<polygon points="997.4,180.6 1012.5,183.1 1014.3,197.8 999.4,195.0" fill="#1c1f29"/>
<polygon points="997.6,182.3 1012.7,184.9 1012.9,186.0 997.8,183.5" fill="#565d75"/>
<polygon points="999.8,185.2 1004.9,186.1 1005.8,193.3 1000.8,192.4" fill="#7d86a2"/>
<polygon points="1006.1,186.3 1011.2,187.2 1012.1,194.5 1007.0,193.6" fill="#7d86a2"/>
<polygon points="1000.1,199.4 1014.8,202.3 1017.4,221.1 1003.0,218.1" fill="#1c1f29"/>
<polygon points="1000.4,201.7 1015.2,204.6 1015.4,206.1 1000.7,203.2" fill="#565d75"/>
<polygon points="1002.7,205.4 1007.7,206.4 1009.1,215.7 1004.2,214.7" fill="#7d86a2"/>
<polygon points="1008.8,206.6 1013.8,207.6 1015.2,217.0 1010.2,215.9" fill="#7d86a2"/>
<polygon points="1003.7,222.4 1018.0,225.5 1020.5,243.5 1006.5,240.2" fill="#1c1f29"/>
<polygon points="1004.0,224.5 1018.3,227.6 1018.5,229.1 1004.3,226.0" fill="#565d75"/>
<polygon points="1006.2,228.1 1011.0,229.2 1012.4,238.1 1007.6,237.0" fill="#7d86a2"/>
<polygon points="1012.2,229.4 1017.0,230.5 1018.3,239.5 1013.5,238.4" fill="#7d86a2"/>
<polygon points="1015.1,170.1 1027.7,172.1 1029.2,185.9 1016.8,183.8" fill="#1d202c"/>
<polygon points="1016.8,183.8 1029.2,185.9 1030.7,200.8 1018.5,198.5" fill="#1c1f29"/>
<polygon points="1017.0,185.6 1029.4,187.7 1029.5,188.9 1017.2,186.8" fill="#565d75"/>
<polygon points="1018.8,188.5 1023.0,189.2 1023.8,196.6 1019.6,195.9" fill="#7d86a2"/>
<polygon points="1024.0,189.4 1028.2,190.1 1028.9,197.6 1024.7,196.8" fill="#7d86a2"/>
<polygon points="1019.1,203.1 1031.1,205.4 1033.3,224.4 1021.6,222.0" fill="#1c1f29"/>
<polygon points="1019.4,205.4 1031.4,207.7 1031.6,209.2 1019.6,206.9" fill="#565d75"/>
<polygon points="1021.2,209.0 1025.3,209.9 1026.5,219.3 1022.5,218.5" fill="#7d86a2"/>
<polygon points="1026.3,210.0 1030.4,210.9 1031.5,220.3 1027.4,219.5" fill="#7d86a2"/>
<polygon points="1022.1,226.3 1033.8,228.9 1035.9,247.1 1024.5,244.4" fill="#1c1f29"/>
<polygon points="1022.4,228.5 1034.1,231.1 1034.2,232.5 1022.6,230.0" fill="#565d75"/>
<polygon points="1024.2,232.1 1028.1,232.9 1029.3,242.0 1025.4,241.1" fill="#7d86a2"/>
<polygon points="1029.1,233.2 1033.0,234.0 1034.1,243.1 1030.2,242.2" fill="#7d86a2"/>
<polygon points="1031.3,172.6 1044.7,174.7 1045.9,188.7 1032.7,186.5" fill="#1d202c"/>
<polygon points="1032.7,186.5 1045.9,188.7 1047.1,203.9 1034.2,201.5" fill="#1c1f29"/>
<polygon points="1032.9,188.3 1046.1,190.5 1046.1,191.7 1033.0,189.5" fill="#565d75"/>
<polygon points="1034.7,191.3 1039.2,192.0 1039.8,199.6 1035.4,198.8" fill="#7d86a2"/>
<polygon points="1040.2,192.2 1044.7,193.0 1045.3,200.6 1040.8,199.8" fill="#7d86a2"/>
<polygon points="1034.6,206.1 1047.4,208.6 1049.2,227.8 1036.7,225.1" fill="#1c1f29"/>
<polygon points="1034.9,208.4 1047.7,210.9 1047.8,212.4 1035.0,209.9" fill="#565d75"/>
<polygon points="1036.7,212.1 1041.1,213.0 1042.0,222.5 1037.8,221.6" fill="#7d86a2"/>
<polygon points="1042.1,213.2 1046.4,214.0 1047.4,223.6 1043.1,222.7" fill="#7d86a2"/>
<polygon points="1037.2,229.6 1049.6,232.3 1051.3,250.7 1039.2,247.8" fill="#1c1f29"/>
<polygon points="1037.4,231.8 1049.8,234.5 1050.0,236.0 1037.6,233.2" fill="#565d75"/>
<polygon points="1039.2,235.4 1043.4,236.3 1044.4,245.5 1040.2,244.5" fill="#7d86a2"/>
<polygon points="1044.4,236.5 1048.6,237.5 1049.5,246.7 1045.3,245.7" fill="#7d86a2"/>
<polygon points="1049.3,175.4 1056.3,176.5 1057.3,190.6 1050.4,189.5" fill="#1d202c"/>
<polygon points="1050.4,189.5 1057.3,190.6 1058.3,206.0 1051.5,204.7" fill="#1c1f29"/>
<polygon points="1050.6,191.3 1057.4,192.5 1057.5,193.7 1050.7,192.5" fill="#565d75"/>
<polygon points="1052.1,194.3 1056.4,195.0 1056.9,202.7 1052.6,201.9" fill="#7d86a2"/>
<polygon points="1051.9,209.4 1058.6,210.7 1060.1,230.0 1053.5,228.7" fill="#1c1f29"/>
<polygon points="1052.1,211.8 1058.8,213.1 1058.9,214.6 1052.2,213.3" fill="#565d75"/>
<polygon points="1053.7,215.5 1057.8,216.3 1058.6,225.9 1054.5,225.1" fill="#7d86a2"/>
<polygon points="1053.9,233.2 1060.4,234.6 1061.9,253.1 1055.5,251.6" fill="#1c1f29"/>
<polygon points="1054.1,235.4 1060.6,236.8 1060.7,238.3 1054.2,236.9" fill="#565d75"/>
<polygon points="1055.7,239.0 1059.7,239.9 1060.4,249.2 1056.5,248.2" fill="#7d86a2"/>
<polygon points="1060.3,177.1 1067.7,178.2 1068.5,192.5 1061.2,191.3" fill="#1d202c"/>
<polygon points="1061.2,191.3 1068.5,192.5 1069.3,208.0 1062.1,206.7" fill="#1c1f29"/>
<polygon points="1061.4,193.1 1068.6,194.4 1068.7,195.6 1061.4,194.4" fill="#565d75"/>
<polygon points="1062.9,196.2 1067.4,196.9 1067.8,204.7 1063.4,203.9" fill="#7d86a2"/>
<polygon points="1062.4,211.5 1069.5,212.9 1070.7,232.3 1063.8,230.8" fill="#1c1f29"/>
<polygon points="1062.6,213.8 1069.7,215.2 1069.8,216.7 1062.7,215.4" fill="#565d75"/>
<polygon points="1064.2,217.6 1068.6,218.4 1069.2,228.1 1064.9,227.2" fill="#7d86a2"/>
<polygon points="1064.1,235.4 1071.0,236.9 1072.2,255.5 1065.5,254.0" fill="#1c1f29"/>
<polygon points="1064.3,237.6 1071.1,239.1 1071.2,240.6 1064.4,239.1" fill="#565d75"/>
<polygon points="1065.9,241.3 1070.1,242.2 1070.7,251.5 1066.5,250.6" fill="#7d86a2"/>
<polygon points="1077.0,179.6 1083.7,180.7 1084.2,195.1 1077.7,194.0" fill="#1d202c"/>
<polygon points="1077.7,194.0 1084.2,195.1 1084.7,210.9 1078.2,209.7" fill="#1c1f29"/>
<polygon points="1077.7,195.9 1084.3,197.0 1084.3,198.3 1077.8,197.2" fill="#565d75"/>
<polygon points="1079.1,199.0 1083.2,199.7 1083.4,207.5 1079.4,206.8" fill="#7d86a2"/>
<polygon points="1078.4,214.6 1084.8,215.8 1085.7,235.4 1079.4,234.1" fill="#1c1f29"/>
<polygon points="1078.5,216.9 1084.9,218.2 1085.0,219.7 1078.6,218.5" fill="#565d75"/>
<polygon points="1080.0,220.7 1083.9,221.5 1084.4,231.3 1080.5,230.5" fill="#7d86a2"/>
<polygon points="1079.6,238.8 1085.9,240.1 1086.7,258.9 1080.6,257.5" fill="#1c1f29"/>
<polygon points="1079.8,241.0 1086.0,242.4 1086.0,243.9 1079.8,242.5" fill="#565d75"/>
<polygon points="1081.2,244.7 1085.0,245.5 1085.4,254.9 1081.6,254.0" fill="#7d86a2"/>
<polygon points="1089.3,181.5 1103.7,183.7 1103.9,198.4 1089.7,196.0" fill="#1d202c"/>
<polygon points="1089.7,196.0 1103.9,198.4 1104.0,214.5 1090.1,211.9" fill="#1c1f29"/>
<polygon points="1089.8,198.0 1103.9,200.3 1103.9,201.6 1089.8,199.2" fill="#565d75"/>
<polygon points="1091.5,201.1 1096.3,201.9 1096.4,209.9 1091.7,209.1" fill="#7d86a2"/>
<polygon points="1097.4,202.1 1102.2,203.0 1102.3,211.0 1097.5,210.1" fill="#7d86a2"/>
<polygon points="1090.2,216.9 1104.0,219.5 1104.4,239.4 1090.9,236.5" fill="#1c1f29"/>
<polygon points="1090.3,219.2 1104.1,221.9 1104.1,223.5 1090.4,220.8" fill="#565d75"/>
<polygon points="1092.1,223.1 1096.7,224.0 1097.0,233.9 1092.4,232.9" fill="#7d86a2"/>
<polygon points="1097.8,224.2 1102.5,225.1 1102.7,235.1 1098.1,234.1" fill="#7d86a2"/>
<polygon points="1091.1,241.2 1104.5,244.1 1104.8,263.1 1091.8,260.1" fill="#1c1f29"/>
<polygon points="1091.2,243.5 1104.5,246.4 1104.5,247.9 1091.2,245.0" fill="#565d75"/>
<polygon points="1092.9,247.2 1097.4,248.2 1097.6,257.7 1093.2,256.7" fill="#7d86a2"/>
<polygon points="1098.4,248.5 1103.0,249.5 1103.2,259.0 1098.7,257.9" fill="#7d86a2"/>
<polygon points="1109.3,184.6 1124.1,186.9 1124.0,201.8 1109.4,199.3" fill="#1d202c"/>
<polygon points="1109.4,199.3 1124.0,201.8 1123.7,218.2 1109.4,215.5" fill="#1c1f29"/>
<polygon points="1109.4,201.3 1123.9,203.7 1123.9,205.1 1109.4,202.6" fill="#565d75"/>
<polygon points="1111.1,204.5 1116.0,205.3 1115.9,213.5 1111.1,212.6" fill="#7d86a2"/>
<polygon points="1117.2,205.5 1122.1,206.4 1122.0,214.6 1117.1,213.7" fill="#7d86a2"/>
<polygon points="1109.4,220.6 1123.6,223.3 1123.5,243.4 1109.6,240.5" fill="#1c1f29"/>
<polygon points="1109.4,222.9 1123.6,225.7 1123.6,227.3 1109.4,224.5" fill="#565d75"/>
<polygon points="1111.1,226.9 1115.9,227.8 1116.0,237.8 1111.2,236.8" fill="#7d86a2"/>
<polygon points="1117.0,228.0 1121.8,229.0 1121.8,239.0 1117.1,238.0" fill="#7d86a2"/>
<polygon points="1109.7,245.2 1123.4,248.2 1123.3,267.4 1109.9,264.3" fill="#1c1f29"/>
<polygon points="1109.7,247.5 1123.4,250.5 1123.4,252.1 1109.7,249.1" fill="#565d75"/>
<polygon points="1111.4,251.3 1116.0,252.3 1116.0,261.9 1111.5,260.9" fill="#7d86a2"/>
<polygon points="1117.1,252.6 1121.7,253.6 1121.7,263.2 1117.1,262.2" fill="#7d86a2"/>
<polygon points="1129.3,187.7 1137.3,188.9 1136.9,203.9 1129.1,202.6" fill="#1d202c"/>
<polygon points="1129.1,202.6 1136.9,203.9 1136.4,220.6 1128.7,219.2" fill="#1c1f29"/>
<polygon points="1129.0,204.6 1136.9,205.9 1136.8,207.3 1129.0,205.9" fill="#565d75"/>
<polygon points="1130.5,207.9 1135.4,208.7 1135.1,217.0 1130.3,216.1" fill="#7d86a2"/>
<polygon points="1128.6,224.3 1136.2,225.7 1135.8,246.0 1128.4,244.4" fill="#1c1f29"/>
<polygon points="1128.5,226.7 1136.2,228.2 1136.2,229.8 1128.5,228.3" fill="#565d75"/>
<polygon points="1130.0,230.6 1134.7,231.5 1134.6,241.6 1129.9,240.7" fill="#7d86a2"/>
<polygon points="1128.3,249.3 1135.7,250.9 1135.3,270.2 1128.1,268.5" fill="#1c1f29"/>
<polygon points="1128.2,251.6 1135.6,253.2 1135.6,254.7 1128.2,253.1" fill="#565d75"/>
<polygon points="1129.7,255.4 1134.2,256.4 1134.1,266.1 1129.5,265.0" fill="#7d86a2"/>
<polygon points="1149.3,190.7 1165.1,193.2 1164.2,208.5 1148.7,205.9" fill="#1d202c"/>
<polygon points="1148.7,205.9 1164.2,208.5 1163.2,225.6 1148.0,222.8" fill="#1c1f29"/>
<polygon points="1148.6,207.9 1164.1,210.6 1164.0,211.9 1148.6,209.3" fill="#565d75"/>
<polygon points="1150.3,211.3 1155.6,212.2 1155.1,220.7 1149.9,219.7" fill="#7d86a2"/>
<polygon points="1156.8,212.4 1162.1,213.3 1161.6,221.9 1156.3,220.9" fill="#7d86a2"/>
<polygon points="1147.7,228.0 1162.9,230.9 1161.8,251.4 1147.1,248.3" fill="#1c1f29"/>
<polygon points="1147.7,230.4 1162.8,233.4 1162.7,235.0 1147.6,232.0" fill="#565d75"/>
<polygon points="1149.3,234.4 1154.4,235.4 1154.0,245.6 1149.0,244.6" fill="#7d86a2"/>
<polygon points="1155.6,235.7 1160.7,236.7 1160.2,246.9 1155.2,245.9" fill="#7d86a2"/>
<polygon points="1146.8,253.3 1161.5,256.4 1160.5,276.1 1146.2,272.8" fill="#1c1f29"/>
<polygon points="1146.8,255.6 1161.4,258.8 1161.3,260.4 1146.7,257.2" fill="#565d75"/>
<polygon points="1148.4,259.5 1153.3,260.6 1152.9,270.4 1148.0,269.3" fill="#7d86a2"/>
<polygon points="1154.5,260.8 1159.5,261.9 1159.0,271.8 1154.1,270.6" fill="#7d86a2"/>
<polygon points="1171.3,194.1 1179.7,195.4 1178.6,210.9 1170.3,209.5" fill="#1d202c"/>
<polygon points="1170.3,209.5 1178.6,210.9 1177.3,228.2 1169.2,226.7" fill="#1c1f29"/>
<polygon points="1170.2,211.6 1178.4,213.0 1178.3,214.4 1170.1,213.0" fill="#565d75"/>
<polygon points="1171.6,215.0 1176.7,215.9 1176.1,224.5 1171.0,223.6" fill="#7d86a2"/>
<polygon points="1168.8,232.0 1176.9,233.6 1175.5,254.3 1167.6,252.6" fill="#1c1f29"/>
<polygon points="1168.7,234.5 1176.7,236.1 1176.6,237.7 1168.6,236.2" fill="#565d75"/>
<polygon points="1170.1,238.5 1175.0,239.5 1174.3,249.9 1169.4,248.8" fill="#7d86a2"/>
<polygon points="1167.3,257.7 1175.1,259.4 1173.8,279.2 1166.1,277.4" fill="#1c1f29"/>
<polygon points="1167.2,260.0 1174.9,261.7 1174.8,263.3 1167.1,261.6" fill="#565d75"/>
<polygon points="1168.5,263.9 1173.3,265.0 1172.6,274.9 1167.9,273.8" fill="#7d86a2"/>
<polygon points="1185.8,196.3 1202.4,198.9 1200.9,214.6 1184.6,211.9" fill="#1d202c"/>
<polygon points="1184.6,211.9 1200.9,214.6 1199.2,232.3 1183.2,229.3" fill="#1c1f29"/>
<polygon points="1184.4,214.0 1200.7,216.8 1200.6,218.2 1184.3,215.4" fill="#565d75"/>
<polygon points="1186.1,217.5 1191.6,218.4 1190.8,227.2 1185.4,226.2" fill="#7d86a2"/>
<polygon points="1192.9,218.7 1198.4,219.6 1197.6,228.4 1192.1,227.4" fill="#7d86a2"/>
<polygon points="1182.7,234.7 1198.7,237.8 1196.7,258.7 1181.2,255.5" fill="#1c1f29"/>
<polygon points="1182.6,237.2 1198.4,240.3 1198.3,242.0 1182.4,238.9" fill="#565d75"/>
<polygon points="1184.1,241.3 1189.5,242.4 1188.6,252.8 1183.3,251.7" fill="#7d86a2"/>
<polygon points="1190.8,242.6 1196.2,243.7 1195.2,254.2 1189.9,253.1" fill="#7d86a2"/>
<polygon points="1180.8,260.6 1196.2,263.9 1194.3,284.0 1179.3,280.5" fill="#1c1f29"/>
<polygon points="1180.6,263.0 1196.0,266.3 1195.8,267.9 1180.5,264.6" fill="#565d75"/>
<polygon points="1182.2,267.0 1187.3,268.1 1186.5,278.1 1181.4,276.9" fill="#7d86a2"/>
<polygon points="1188.6,268.4 1193.8,269.5 1192.9,279.5 1187.7,278.4" fill="#7d86a2"/>
<polygon points="1209.3,199.9 1218.2,201.3 1216.4,217.2 1207.7,215.8" fill="#1d202c"/>
<polygon points="1207.7,215.8 1216.4,217.2 1214.4,235.2 1205.8,233.6" fill="#1c1f29"/>
<polygon points="1207.5,217.9 1216.2,219.4 1216.0,220.8 1207.3,219.3" fill="#565d75"/>
<polygon points="1208.9,221.4 1214.3,222.4 1213.3,231.3 1207.9,230.3" fill="#7d86a2"/>
<polygon points="1205.3,239.1 1213.8,240.7 1211.5,261.8 1203.2,260.1" fill="#1c1f29"/>
<polygon points="1205.0,241.6 1213.5,243.3 1213.3,244.9 1204.8,243.3" fill="#565d75"/>
<polygon points="1206.3,245.7 1211.6,246.8 1210.4,257.3 1205.2,256.2" fill="#7d86a2"/>
<polygon points="1202.6,265.3 1210.9,267.1 1208.7,287.3 1200.6,285.4" fill="#1c1f29"/>
<polygon points="1202.4,267.7 1210.6,269.5 1210.5,271.1 1202.2,269.3" fill="#565d75"/>
<polygon points="1203.7,271.7 1208.7,272.8 1207.7,282.9 1202.6,281.8" fill="#7d86a2"/>
<polygon points="900.4,176.7 1229.3,238.6 1228.8,242.6 901.3,179.6" fill="#b4b8cc"/>
<polygon points="907.1,198.2 1226.0,265.3 1225.5,269.2 907.9,201.0" fill="#b4b8cc"/>
<polygon points="1270.0,108.4 1275.0,112.5 1260.5,160.0 1246.5,203.0 1238.0,260.0 1226.0,300.0 1220.0,312.6 1223.2,291.8 1234.0,201.7" fill="#a04832"/>
<polygon points="1234.0,201.7 1242.0,180.0 1244.5,181.0 1237.6,203.0 1230.8,262.0 1225.3,296.0 1223.2,291.8" fill="#f0714f"/>
<polygon points="1264.6,122.0 1266.8,122.5 1265.8,126.5 1263.6,126.0" fill="#3a2a2a"/>
<polygon points="1261.1,131.5 1263.3,132.0 1262.3,136.0 1260.1,135.5" fill="#3a2a2a"/>
<polygon points="1257.6,141.0 1259.8,141.5 1258.8,145.5 1256.6,145.0" fill="#3a2a2a"/>
<polygon points="1254.1,150.5 1256.3,151.0 1255.3,155.0 1253.1,154.5" fill="#3a2a2a"/>
<polygon points="1250.5,160.0 1252.7,160.5 1251.7,164.5 1249.5,164.0" fill="#3a2a2a"/>
<polygon points="1247.0,169.5 1249.2,170.0 1248.2,174.0 1246.0,173.5" fill="#3a2a2a"/>
<polygon points="1243.5,179.0 1245.7,179.5 1244.7,183.5 1242.5,183.0" fill="#3a2a2a"/>
<polygon points="1240.0,188.5 1242.2,189.0 1241.2,193.0 1239.0,192.5" fill="#3a2a2a"/>
<polygon points="1236.5,198.0 1238.7,198.5 1237.7,202.5 1235.5,202.0" fill="#3a2a2a"/>
<path d="M1262.500 160L1247 204l-9 58-9 36" stroke="#7f8088" stroke-width="1" fill="none"/>
<polygon points="1223.2,291.8 1226.0,292.0 1222.5,313.5 1220.0,312.6" fill="#2c3040"/>
<polygon points="1256.5,166.8 1286.0,169.5 1281.2,208.7 1245.0,204.0" fill="#c0c0c0"/>
<polygon points="1257.8,168.9 1283.2,171.3 1278.8,206.3 1247.6,202.2" fill="#5c5d69"/>
<polygon points="1245.0,204.0 1281.2,208.7 1277.7,235.8 1241.5,229.0" fill="#b8b2bc"/>
<path d="M1243.2 229.5L1239.2 267.8" stroke="#9d9da3" stroke-width="2.800"/>
<path d="M1258.8 232.5L1252.4 271" stroke="#9d9da3" stroke-width="2.800"/>
<path d="M1274.8 235.5L1266.9 274" stroke="#9d9da3" stroke-width="2.800"/>
<path d="M1240.800 229.500l-9 39M1246.500 230.500l-8 38" stroke="#8c8c92" stroke-width="1"/>
<path d="M924.1 238.8L929.7 256.8" stroke="#a4a5aa" stroke-width="2.9" stroke-linecap="round"/>
<path d="M932.4 240.9L937.7 259.0" stroke="#a4a5aa" stroke-width="2.9" stroke-linecap="round"/>
<path d="M941.2 243.1L946.2 261.4" stroke="#a4a5aa" stroke-width="2.9" stroke-linecap="round"/>
<path d="M950.0 245.3L954.7 263.7" stroke="#a4a5aa" stroke-width="3.0" stroke-linecap="round"/>
<path d="M958.9 247.6L963.3 266.1" stroke="#a4a5aa" stroke-width="3.0" stroke-linecap="round"/>
<path d="M968.4 250.0L972.5 268.7" stroke="#a4a5aa" stroke-width="3.0" stroke-linecap="round"/>
<path d="M977.8 252.4L981.6 271.2" stroke="#a4a5aa" stroke-width="3.0" stroke-linecap="round"/>
<path d="M985.8 254.4L989.3 273.3" stroke="#a4a5aa" stroke-width="3.0" stroke-linecap="round"/>
<path d="M993.6 256.3L996.8 275.4" stroke="#a4a5aa" stroke-width="3.0" stroke-linecap="round"/>
<path d="M1002.5 258.6L1005.4 277.8" stroke="#a4a5aa" stroke-width="3.1" stroke-linecap="round"/>
<path d="M1011.3 260.8L1013.9 280.1" stroke="#a4a5aa" stroke-width="3.1" stroke-linecap="round"/>
<path d="M1021.4 263.4L1023.7 282.9" stroke="#a4a5aa" stroke-width="3.1" stroke-linecap="round"/>
<path d="M1031.5 265.9L1033.4 285.6" stroke="#a4a5aa" stroke-width="3.1" stroke-linecap="round"/>
<path d="M1041.0 268.3L1042.6 288.1" stroke="#a4a5aa" stroke-width="3.1" stroke-linecap="round"/>
<path d="M1051.7 271.0L1053.0 291.0" stroke="#a4a5aa" stroke-width="3.2" stroke-linecap="round"/>
<path d="M1061.8 273.6L1062.7 293.7" stroke="#a4a5aa" stroke-width="3.2" stroke-linecap="round"/>
<path d="M1071.9 276.1L1072.5 296.4" stroke="#a4a5aa" stroke-width="3.2" stroke-linecap="round"/>
<path d="M1082.7 278.8L1082.9 299.3" stroke="#a4a5aa" stroke-width="3.2" stroke-linecap="round"/>
<path d="M1093.4 281.5L1093.2 302.1" stroke="#a4a5aa" stroke-width="3.2" stroke-linecap="round"/>
<path d="M1104.1 284.2L1103.6 305.0" stroke="#a4a5aa" stroke-width="3.3" stroke-linecap="round"/>
<path d="M1114.5 286.9L1113.6 307.8" stroke="#a4a5aa" stroke-width="3.3" stroke-linecap="round"/>
<path d="M1125.8 289.7L1124.5 310.8" stroke="#a4a5aa" stroke-width="3.3" stroke-linecap="round"/>
<path d="M1137.2 292.6L1135.5 313.9" stroke="#a4a5aa" stroke-width="3.3" stroke-linecap="round"/>
<path d="M1149.8 295.8L1147.7 317.2" stroke="#a4a5aa" stroke-width="3.4" stroke-linecap="round"/>
<path d="M1162.5 299.0L1160.0 320.6" stroke="#a4a5aa" stroke-width="3.4" stroke-linecap="round"/>
<path d="M1175.7 302.3L1172.7 324.2" stroke="#a4a5aa" stroke-width="3.4" stroke-linecap="round"/>
<path d="M1189.0 305.7L1185.6 327.7" stroke="#a4a5aa" stroke-width="3.4" stroke-linecap="round"/>
<path d="M1202.9 309.2L1199.0 331.4" stroke="#a4a5aa" stroke-width="3.5" stroke-linecap="round"/>
<path d="M1218.0 313.0L1213.6 335.5" stroke="#a4a5aa" stroke-width="3.5" stroke-linecap="round"/>
<path d="M1151 222.500v-7" stroke="#1030ff" stroke-width="1"/><path d="M1151 222.500l-8-.8" stroke="#10e010" stroke-width="1"/><path d="M1151 222.500l3-3" stroke="#e01010" stroke-width="1"/></g>
<circle cx="574.600" cy="270.400" r="46.700" fill="#232323"/>
<path d="M575.100 268V252" stroke="#0000ff" stroke-width="2.400"/><path d="M575.100 243.600l3.200 9.400h-6.400z" fill="#0000ff"/>
<path d="M572 270.800l-14-2.600" stroke="#18e018" stroke-width="1.800"/><path d="M552.400 266.800l7 -.8-.9 4.200z" fill="#18e018"/>
<path d="M577 268.500l3.600-4" stroke="#f01010" stroke-width="2.400"/><circle cx="581.300" cy="263.600" r="2" fill="#f01010"/>
<circle cx="575.100" cy="271" r="4.500" fill="#a8a8a8"/><circle cx="574" cy="269.800" r="1.800" fill="#c4c4c4"/>
<text x="575.600" y="237.200" font-family="Liberation Sans,sans-serif" font-size="10.500" fill="#0000ff">Z</text>
<text x="547" y="266" font-family="Liberation Sans,sans-serif" font-size="7" fill="#18e018">Y</text>
<text x="584.800" y="259.800" font-family="Liberation Sans,sans-serif" font-size="6.500" fill="#f01010">X</text>
<polygon points="1667.3,92.2 1696.3,77.6 1742.1,82.0 1729.4,100.8" fill="#fdfdfd" stroke="#2c2c2c" stroke-width="1.200" stroke-linejoin="round"/>
<polygon points="1729.4,100.8 1742.1,82.0 1736.5,129.5 1725.4,156.5" fill="#fbfbfb" stroke="#2c2c2c" stroke-width="1.200" stroke-linejoin="round"/>
<polygon points="1667.3,92.2 1729.4,100.8 1725.4,156.5 1674.3,142.4" fill="#ffffff" stroke="#2c2c2c" stroke-width="1.200" stroke-linejoin="round"/>
<path d="M1703 83l8-2.500-4 4z" fill="#bbb" opacity=".6"/>
<text transform="matrix(.98 .205 -.07 .99 1681 127)" font-family="Liberation Sans,sans-serif" font-size="16" fill="#5a5a5a" textLength="34" lengthAdjust="spacingAndGlyphs">Слева</text>
</svg>
<!-- BOTTOM PANEL -->
<div id="bpanel" class="a">
  <div class="a" style="left:0;top:0;width:1251px;height:39px;background:#555"></div>
  <div class="a" style="left:602px;top:4px;width:48px;height:2.500px;background:#3a9abc"></div>
  <svg style="left:15.5px;top:16px" width="17" height="15" viewBox="70 58 17 15" fill="#f0f0f0"><rect x="70" y="58.200" width="13.400" height="1.800"/><rect x="70" y="62.200" width="13.400" height="1.800"/><rect x="70" y="66.200" width="9.600" height="1.800"/><path d="M81.200 66.300l4.800 2.700-4.800 2.700z"/></svg>
  <div class="t" style="left:47.5px;top:15px;font-size:14px;color:#ececec;letter-spacing:0.20px">Коллизии (количество: 19)</div>
  <div class="a" style="left:548px;top:13px;width:78.500px;height:20px;border-radius:4px;background:#3a92b4;box-shadow:0 1px 2px rgba(0,0,0,.4)"></div>
  <div class="t" style="left:557px;top:16.5px;font-size:12px;font-weight:700;color:#fff;letter-spacing:0.75px">коллизии</div>
  <div class="a" style="left:631px;top:13px;width:72px;height:20px;border-radius:4px;background:#fff;box-shadow:0 1px 2px rgba(0,0,0,.4)"></div>
  <div class="t" style="left:639.5px;top:18.2px;font-size:10px;color:#333;letter-spacing:0.93px">В ЗАДАЧЕ</div>
  <svg style="left:1079px;top:11px" width="22" height="22" viewBox="1604 412 22 22" fill="none" stroke="#ececec" stroke-width="1.500"><path d="M1611 426.200h-3a1.500 1.500 0 0 1-1.500-1.500v-8.500a1.500 1.500 0 0 1 1.500-1.500h10a1.500 1.500 0 0 1 1.500 1.500v3.600"/><path d="M1614.500 424.500v-3.200a1.500 1.500 0 0 1 1.500-1.500h5.500a1.500 1.500 0 0 1 1.500 1.500v8a1.500 1.500 0 0 1-1.500 1.500h-8a1.500 1.500 0 0 1-1.500-1.500v-1"/></svg>
  <svg style="left:1115px;top:11px" width="22" height="22" viewBox="1640 412 22 22" fill="#ececec"><rect x="1643" y="415.200" width="14" height="1.800"/><rect x="1643" y="430.100" width="14" height="1.800"/><rect x="1649.200" y="420.500" width="1.800" height="6"/><path d="M1646.600 421.800l3.500-3.600 3.500 3.600zM1646.600 425.300l3.500 3.600 3.500-3.600z"/></svg>
  <svg style="left:1149px;top:11px" width="22" height="22" viewBox="1674 412 22 22" fill="#ececec"><rect x="1677" y="421" width="14" height="1.600"/><rect x="1677" y="423.600" width="14" height="1.600"/><rect x="1683.200" y="413.800" width="1.600" height="3.500"/><rect x="1683.200" y="429" width="1.600" height="3.500"/><path d="M1680.800 416.400l3.200 3.300 3.200-3.300zM1680.800 429.900l3.200-3.300 3.200 3.300z"/></svg>
  <svg style="left:1182.7px;top:11.8px" width="21" height="21" viewBox="0 0 24 24" fill="#ececec"><path d="M19.140 12.940c.04-.3.060-.61.060-.94 0-.32-.02-.64-.07-.94l2.030-1.580a.49.490 0 0 0 .12-.61l-1.920-3.320a.488.488 0 0 0-.59-.22l-2.390.96c-.5-.38-1.030-.7-1.620-.94l-.36-2.540a.484.484 0 0 0-.48-.41h-3.840c-.24 0-.43.170-.47.410l-.36 2.540c-.59.240-1.130.57-1.620.94l-2.390-.96c-.22-.08-.47 0-.59.220L2.740 8.870c-.12.210-.08.470.12.610l2.030 1.580c-.05.300-.09.630-.09.940s.02.640.07.940l-2.030 1.580a.49.490 0 0 0-.12.610l1.920 3.320c.12.220.37.290.59.220l2.390-.96c.5.380 1.030.7 1.620.94l.36 2.540c.05.240.24.410.48.410h3.840c.24 0 .44-.17.470-.41l.36-2.540c.59-.24 1.130-.56 1.620-.94l2.390.96c.22.080.47 0 .59-.22l1.920-3.320c.12-.22.070-.47-.12-.61l-2.010-1.580zM12 15.600c-1.980 0-3.600-1.620-3.600-3.600s1.620-3.600 3.600-3.600 3.600 1.620 3.600 3.600-1.620 3.600-3.600 3.600z"/></svg>
  <svg style="left:1221.3px;top:19.2px" width="11" height="7" viewBox="0 0 11 7" fill="none" stroke="#ececec" stroke-width="1.700"><path d="M.8 .8l4.700 4.700 4.700-4.700"/></svg>
  <div class="a" style="left:60px;top:39px;width:1191px;height:32px;background:#666"></div>
  <div class="a" style="left:18px;top:47px;width:15px;height:15px;border:2px solid #8cc3d6;border-radius:2.500px;background:#fff"></div>
  <div class="t" style="left:75.5px;top:48.5px;font-size:12px;font-weight:700;color:#e4e4e4;letter-spacing:-0.37px">Статус</div>
  <div class="t" style="left:147.8px;top:48.5px;font-size:12px;font-weight:700;color:#e4e4e4;letter-spacing:-0.29px">Раздел</div>
  <div class="t" style="left:263.5px;top:48.5px;font-size:12px;font-weight:700;color:#e4e4e4;letter-spacing:-0.26px">Элемент (Модель А)</div>
  <div class="t" style="left:551.5px;top:48.5px;font-size:12px;font-weight:700;color:#e4e4e4;letter-spacing:-0.28px">Элемент (Модель В)</div>
  <div class="t" style="left:844.5px;top:48.5px;font-size:12px;font-weight:700;color:#e4e4e4;letter-spacing:-0.43px">Выборка</div>
  <div class="t" style="left:1045px;top:48.5px;font-size:12px;font-weight:700;color:#e4e4e4;letter-spacing:0.03px">Заметки</div>
  <svg style="left:1105px;top:49px" width="13" height="12" viewBox="0 0 13 12" fill="none" stroke="#ececec" stroke-width="1.600"><path d="M6.500 12V1.500M1 6.500l5.500-5.300 5.500 5.300"/></svg>
  <div class="a tr" style="top:71px;border-top:none"><div class="a" style="left:18px;top:8.5px;width:15px;height:15px;border:1.8px solid #7a7a7a;border-radius:2.500px;background:#fff"></div><svg style="left:75.3px;top:15.500px" width="10" height="5" viewBox="0 0 10 5"><path d="M0 5h10L5 0z" fill="#444"/></svg><div class="t" style="left:92px;top:9px;letter-spacing:0.16px">Неотсортированные</div></div>
  <div class="a tr" style="top:103px"><div class="a" style="left:18px;top:7.5px;width:15px;height:15px;border:1.8px solid #7a7a7a;border-radius:2.500px;background:#fff"></div><svg style="left:75.3px;top:14.500px" width="10" height="5" viewBox="0 0 10 5"><path d="M0 0h10L5 5z" fill="#444"/></svg><div class="t" style="left:92px;letter-spacing:0.21px">группа из 4 коллизий</div></div>
  <div class="a tr alt" style="top:135px"><div class="a" style="left:18px;top:7.5px;width:15px;height:15px;border:1.8px solid #7a7a7a;border-radius:2.500px;background:#fff"></div><div class="t" style="left:76px;letter-spacing:0.31px">новая</div><div class="t" style="left:148.5px;letter-spacing:-0.71px">АР - ОВ</div><div class="a" style="left:264px;top:0;width:271.5px;height:31px;overflow:hidden"><div class="t" style="left:0;letter-spacing:-0.08px">Базовая стена:ADSK_Внутренняя_Кирпич</div></div><div class="a" style="left:552px;top:0;width:276.5px;height:31px;overflow:hidden"><div class="t" style="left:0;letter-spacing:0.02px">Изоляция воздуховода:ADSK_Огнезащита</div></div><div class="t" style="left:845.5px;letter-spacing:-0.05px">АР 2 этаж / ОВ</div><div class="t" style="left:1045.5px;letter-spacing:0.24px">коллизия прикреплена к задаче</div></div>
  <div class="a tr" style="top:167px"><div class="a" style="left:18px;top:7.5px;width:15px;height:15px;border:1.8px solid #7a7a7a;border-radius:2.500px;background:#fff"></div><div class="t" style="left:76px;letter-spacing:0.31px">новая</div><div class="t" style="left:148.5px;letter-spacing:-0.71px">АР - ОВ</div><div class="a" style="left:264px;top:0;width:271.5px;height:31px;overflow:hidden"><div class="t" style="left:0;letter-spacing:-0.08px">Базовая стена:ADSK_Внутренняя_Кирпич</div></div><div class="a" style="left:552px;top:0;width:276.5px;height:31px;overflow:hidden"><div class="t" style="left:0;letter-spacing:-0.01px">ADSK_ВрезкаВоздуховода_Прямоугольная</div></div><div class="t" style="left:845.5px;letter-spacing:-0.05px">АР 2 этаж / ОВ</div></div>
  <div class="a tr alt" style="top:199px"><div class="a" style="left:18px;top:7.5px;width:15px;height:15px;border:1.8px solid #7a7a7a;border-radius:2.500px;background:#fff"></div><div class="t" style="left:76px;letter-spacing:0.31px">новая</div><div class="t" style="left:148.5px;letter-spacing:-0.71px">АР - ОВ</div><div class="a" style="left:264px;top:0;width:271.5px;height:31px;overflow:hidden"><div class="t" style="left:0;letter-spacing:-0.08px">Базовая стена:ADSK_Внутренняя_Кирпич</div></div><div class="a" style="left:552px;top:0;width:276.5px;height:31px;overflow:hidden"><div class="t" style="left:0;letter-spacing:0.02px">Изоляция воздуховода:ADSK_Огнезащита</div></div><div class="t" style="left:845.5px;letter-spacing:-0.05px">АР 2 этаж / ОВ</div></div>
  <div class="a tr" style="top:231px"><div class="a" style="left:18px;top:7.5px;width:15px;height:15px;border:1.8px solid #7a7a7a;border-radius:2.500px;background:#fff"></div><div class="t" style="left:76px;letter-spacing:0.31px">новая</div><div class="t" style="left:148.5px;letter-spacing:-0.71px">АР - ОВ</div><div class="a" style="left:264px;top:0;width:271.5px;height:31px;overflow:hidden"><div class="t" style="left:0;letter-spacing:-0.08px">Базовая стена:ADSK_Внутренняя_Кирпич</div></div><div class="a" style="left:552px;top:0;width:276.5px;height:31px;overflow:hidden"><div class="t" style="left:0;letter-spacing:0.20px">Воздуховод прямоугольного сечения:ADSK</div></div><div class="t" style="left:845.5px;letter-spacing:-0.05px">АР 2 этаж / ОВ</div></div>
  <div class="vl" style="left:59.95px;top:135.5px;height:127.500px"></div>
  <div class="vl" style="left:131.95px;top:135.5px;height:127.500px"></div>
  <div class="vl" style="left:248.15px;top:135.5px;height:127.500px"></div>
  <div class="vl" style="left:535.95px;top:135.5px;height:127.500px"></div>
  <div class="vl" style="left:828.55px;top:135.5px;height:127.500px"></div>
  <div class="vl" style="left:1028.95px;top:135.5px;height:127.500px"></div>
  <svg style="left:235px;top:107px" width="110" height="24" viewBox="760 508 110 24"><defs><filter id="sh" x="-10%" y="-50%" width="120%" height="220%"><feGaussianBlur in="SourceAlpha" stdDeviation="1.500"/><feOffset dx="3.500" dy="4"/><feComponentTransfer><feFuncA type="linear" slope=".45"/></feComponentTransfer><feMerge><feMergeNode/><feMergeNode in="SourceGraphic"/></feMerge></filter></defs><g filter="url(#sh)" fill="#c00000"><path d="M767.900 520.500L782.300 512.900L782.400 518.800L860.800 516.200L860.800 518.800L782.500 522.100L782.500 527.400Z"/></g></svg>
  <div class="a" style="left:0;top:379px;width:1251px;height:10px;background:#6a6a6a"></div>
  <div class="a" style="left:12px;top:381px;width:756.6px;height:6px;border-radius:3px;background:#3c96b4"></div>
  <svg style="left:3px;top:381px" width="4" height="6" viewBox="0 0 4 6"><path d="M4 0v6L0 3z" fill="#3c96b4"/></svg>
  <svg style="left:1245px;top:381px" width="4" height="6" viewBox="0 0 4 6"><path d="M0 0v6l4-3z" fill="#3c96b4"/></svg>
</div>
<!-- RIGHT TOOLBAR -->
<div class="a" style="left:1784px;top:37px;width:36px;height:758px;background:#555"></div>
<div class="a" style="left:1784px;top:77px;width:36px;height:1px;background:#3a3a3a"></div>
<div class="a" style="left:1784px;top:170px;width:36px;height:1px;background:#3a3a3a"></div>
<div class="a" style="left:1784px;top:483px;width:36px;height:1px;background:#3a3a3a"></div>
<div class="a" style="left:1784px;top:532px;width:36px;height:1px;background:#3a3a3a"></div>
<div class="a" style="left:1784px;top:713px;width:36px;height:1px;background:#3a3a3a"></div>
<div class="a" style="left:1786px;top:722px;width:32px;height:32px;background:#8c8c8c"></div>
<div class="a" style="left:1786px;top:766px;width:32px;height:29px;background:#8c8c8c"></div>
<svg style="left:1784px;top:37px" width="36" height="758" viewBox="1784 37 36 758" fill="none" stroke="#e6e6e6" stroke-width="1.200">
  <!-- focus -->
  <path d="M1793.500 54v-5.300h5.300M1805.300 48.700h5.300v5.300M1810.600 59.800v5.300h-5.300M1798.800 65.100h-5.300v-5.300"/>
  <path d="M1802 51.800l4.500 2.600v5.100l-4.500 2.600-4.500-2.600v-5.100z" fill="#e0e0e0" stroke="none"/>
  <!-- tree -->
  <path d="M1802.300 113.700V96.500M1802.300 105.800l-5-4.600M1802.300 107.300l4.400-3.600" stroke-width="1.400"/>
  <path d="M1799.500 107.600h-3.500a4.800 4.800 0 0 1-.8-9.500 7 7 0 0 1 13.800-.4 5 5 0 0 1-.3 9.900h-3.200" stroke-width="1.300"/>
  <!-- screen + focus -->
  <path d="M1812.600 141v-7.200h-23.200v16.800h8v2.700h-3.500" stroke-width="1.300"/>
  <path d="M1799.800 147.500v-4.500h4.500M1809.800 143h4.600v4.500M1814.400 153.700v4.500h-4.600M1804.300 158.200h-4.500v-4.500"/>
  <path d="M1806.900 146.200l4 2.300v4.600l-4 2.300-4-2.300v-4.600z" fill="#e0e0e0" stroke="none"/>
  <!-- ruler -->
  <rect x="1792.300" y="191.500" width="19.600" height="6" stroke-width="1.100"/>
  <path d="M1795 197.500v-3M1798.400 197.500v-2.200M1801.800 197.500v-3M1805.200 197.500v-2.200M1808.600 197.500v-3M1792 200h20.200" stroke-width="1.100"/>
  <path d="M1788 205v4h4z" fill="#f0f0f0" stroke="none"/>
  <!-- section plane -->
  <path d="M1806.800 225.200l-9.600 8.100v19.200l9.600-9z" fill="#e0e0e0" stroke="none"/>
  <path d="M1789.300 241.400l8.400-6.200h17l-8.400 6.200z" stroke-width="1.100"/>
  <!-- cube with section -->
  <path d="M1799.600 293.500V279l4.800-6.200v15.700z" fill="#dcdcdc" stroke="none"/>
  <path d="M1790.500 277.600h15.800v15.900h-15.800zM1797.600 272.500h15.900v16h-15.900zM1790.500 277.600l7.100-5.100M1806.300 277.600l7.200-5.100M1806.300 293.500l7.200-5M1790.500 293.500l7.100-5" stroke-width="1"/>
  <!-- drawing sheet -->
  <path d="M1815 318.500v18.300h-24.500" stroke-width="2"/>
  <path d="M1791.500 316.500h21.500v19.200h-24.700v-16z" stroke-width="1.100"/>
  <path d="M1788.300 319.700h3.200v-3.200" stroke-width=".8"/>
  <path d="M1800.300 317v18.500M1788.800 325.300h24" stroke-width="1" stroke-dasharray="3 1.200 1 1.200"/>
  <rect x="1806.600" y="332.800" width="6" height="2.800" stroke-width="1"/>
  <!-- target -->
  <circle cx="1802" cy="371" r="7.500" stroke-width="1.800"/>
  <circle cx="1802" cy="371" r="3.900" fill="#e0e0e0" stroke="none"/>
  <path d="M1802 359.800v3.200M1802 379v3.200M1790.800 371h3.200M1810 371h3.200" stroke-width="2"/>
  <!-- flag -->
  <circle cx="1802" cy="415" r="12.800" stroke-width="1"/>
  <path d="M1796.500 422.300v-13.600c3-1.300 4.500-.6 6.500.3s4 1 6.800.1v8.600c-2.800.9-4.800.8-6.800-.1s-3.500-1.600-6.500-.3" stroke-width="1"/>
  <!-- S path -->
  <text x="1790.800" y="457.200" font-family="Liberation Sans,sans-serif" font-weight="700" font-size="14.500" fill="#e0e0e0" stroke="none" textLength="9.500" lengthAdjust="spacingAndGlyphs">S</text>
  <path d="M1803.500 448.300h8.800v21h-20.800v-9h12z" stroke-width="1" stroke-dasharray="1 1.300"/>
  <path d="M1802 446.800h3v3h-3zM1810.800 446.800h3v3h-3zM1810.800 467.800h3v3h-3zM1790 467.800h3v3h-3zM1790 458.800h3v3h-3zM1802 458.800h3v3h-3z" fill="#e6e6e6" stroke="none"/>
  <!-- grid lines -->
  <path d="M1789 511.500l26.900-15.300M1789 520.500l26.900-14.700M1790.200 506.600l16.900 10.200M1798 501l17.600 9.600" stroke-width="1.100"/>
  <text x="1788.800" y="505.300" font-family="Liberation Sans,sans-serif" font-size="5.500" fill="#e0e0e0" stroke="none">1</text>
  <text x="1798" y="499.300" font-family="Liberation Sans,sans-serif" font-size="5.500" fill="#e0e0e0" stroke="none">2</text>
  <!-- dashed boxes -->
  <rect x="1790.700" y="545.600" width="22.700" height="22.800" stroke-width="1.200" stroke-dasharray="2.200 2.350" stroke-dashoffset="1.100"/>
  <rect x="1790.700" y="589.600" width="22.700" height="22.800" stroke-width="1.200" stroke-dasharray="2.200 2.350" stroke-dashoffset="1.100"/>
  <rect x="1790.700" y="633.600" width="22.700" height="22.800" stroke-width="1.200" stroke-dasharray="2.200 2.350" stroke-dashoffset="1.100"/>
  <path d="M1800 700.400h-9.300v-22.800h22.700v9" stroke-width="1.200" stroke-dasharray="2.200 2.350" stroke-dashoffset="1.100"/>
  <!-- cube outline in box 1 -->
  <path d="M1802 550.300l6 3.400v6.800l-6 3.500-6-3.500v-6.800zM1796 553.700l6 3.500 6-3.500M1802 557.200v6.800" stroke-width="1"/>
  <!-- eye -->
  <path d="M1795 601c1.500-3.200 4-5.200 7.500-5.200s6 2 7.500 5.200c-1.500 3.200-4 5.100-7.500 5.100s-6-1.900-7.500-5.100z" fill="#e0e0e0" stroke="none"/>
  <circle cx="1802.500" cy="601" r="2.700" fill="#e0e0e0" stroke="#555" stroke-width="1.300"/>
  <!-- eye off -->
  <path d="M1794.200 645c1.500-3.200 4-5.200 7.500-5.200s6 2 7.500 5.200c-1.500 3.200-4 5.100-7.500 5.100s-6-1.900-7.500-5.100z" fill="#e0e0e0" stroke="none"/>
  <circle cx="1801.700" cy="645" r="2.700" fill="#e0e0e0" stroke="#555" stroke-width="1.300"/>
  <path d="M1796.500 640.200l11.500 11.500" stroke="#555" stroke-width="2.600"/>
  <path d="M1795.300 639.200l13 12.500" stroke-width="1.200"/>
  <!-- X box -->
  <rect x="1800" y="687" width="16" height="16" fill="#e0e0e0" stroke="none"/>
  <path d="M1803.800 690.800l8.600 8.600M1812.400 690.800l-8.600 8.600" stroke="#333" stroke-width="1.100"/>
  <!-- solid cube -->
  <path d="M1792 730.200l10-2 10.200 3.200-10 2.200z" fill="#999" stroke="#e4e4e4" stroke-width="1.200" stroke-linejoin="round"/>
  <path d="M1792 730.200l10.200 3.400v15l-9.200-5.700z" fill="#dedede" stroke="#dedede" stroke-width="1" stroke-linejoin="round"/>
  <path d="M1802.200 733.600l10-2.200-1.600 11.500-8.400 5.700z" fill="#7a7a7a" stroke="#dedede" stroke-width="1" stroke-linejoin="round"/>
  <!-- orbit -->
  <ellipse cx="1802" cy="782.500" rx="11.300" ry="5.600" stroke-width="1.700"/>
  <ellipse cx="1802" cy="783" rx="5.300" ry="11.300" stroke-width="1.700"/>
  <path d="M1802 779.500v3.200l-3 2.600M1802 782.700l3 2.600" stroke-width=".9"/>
</svg>
</body>
</html>
